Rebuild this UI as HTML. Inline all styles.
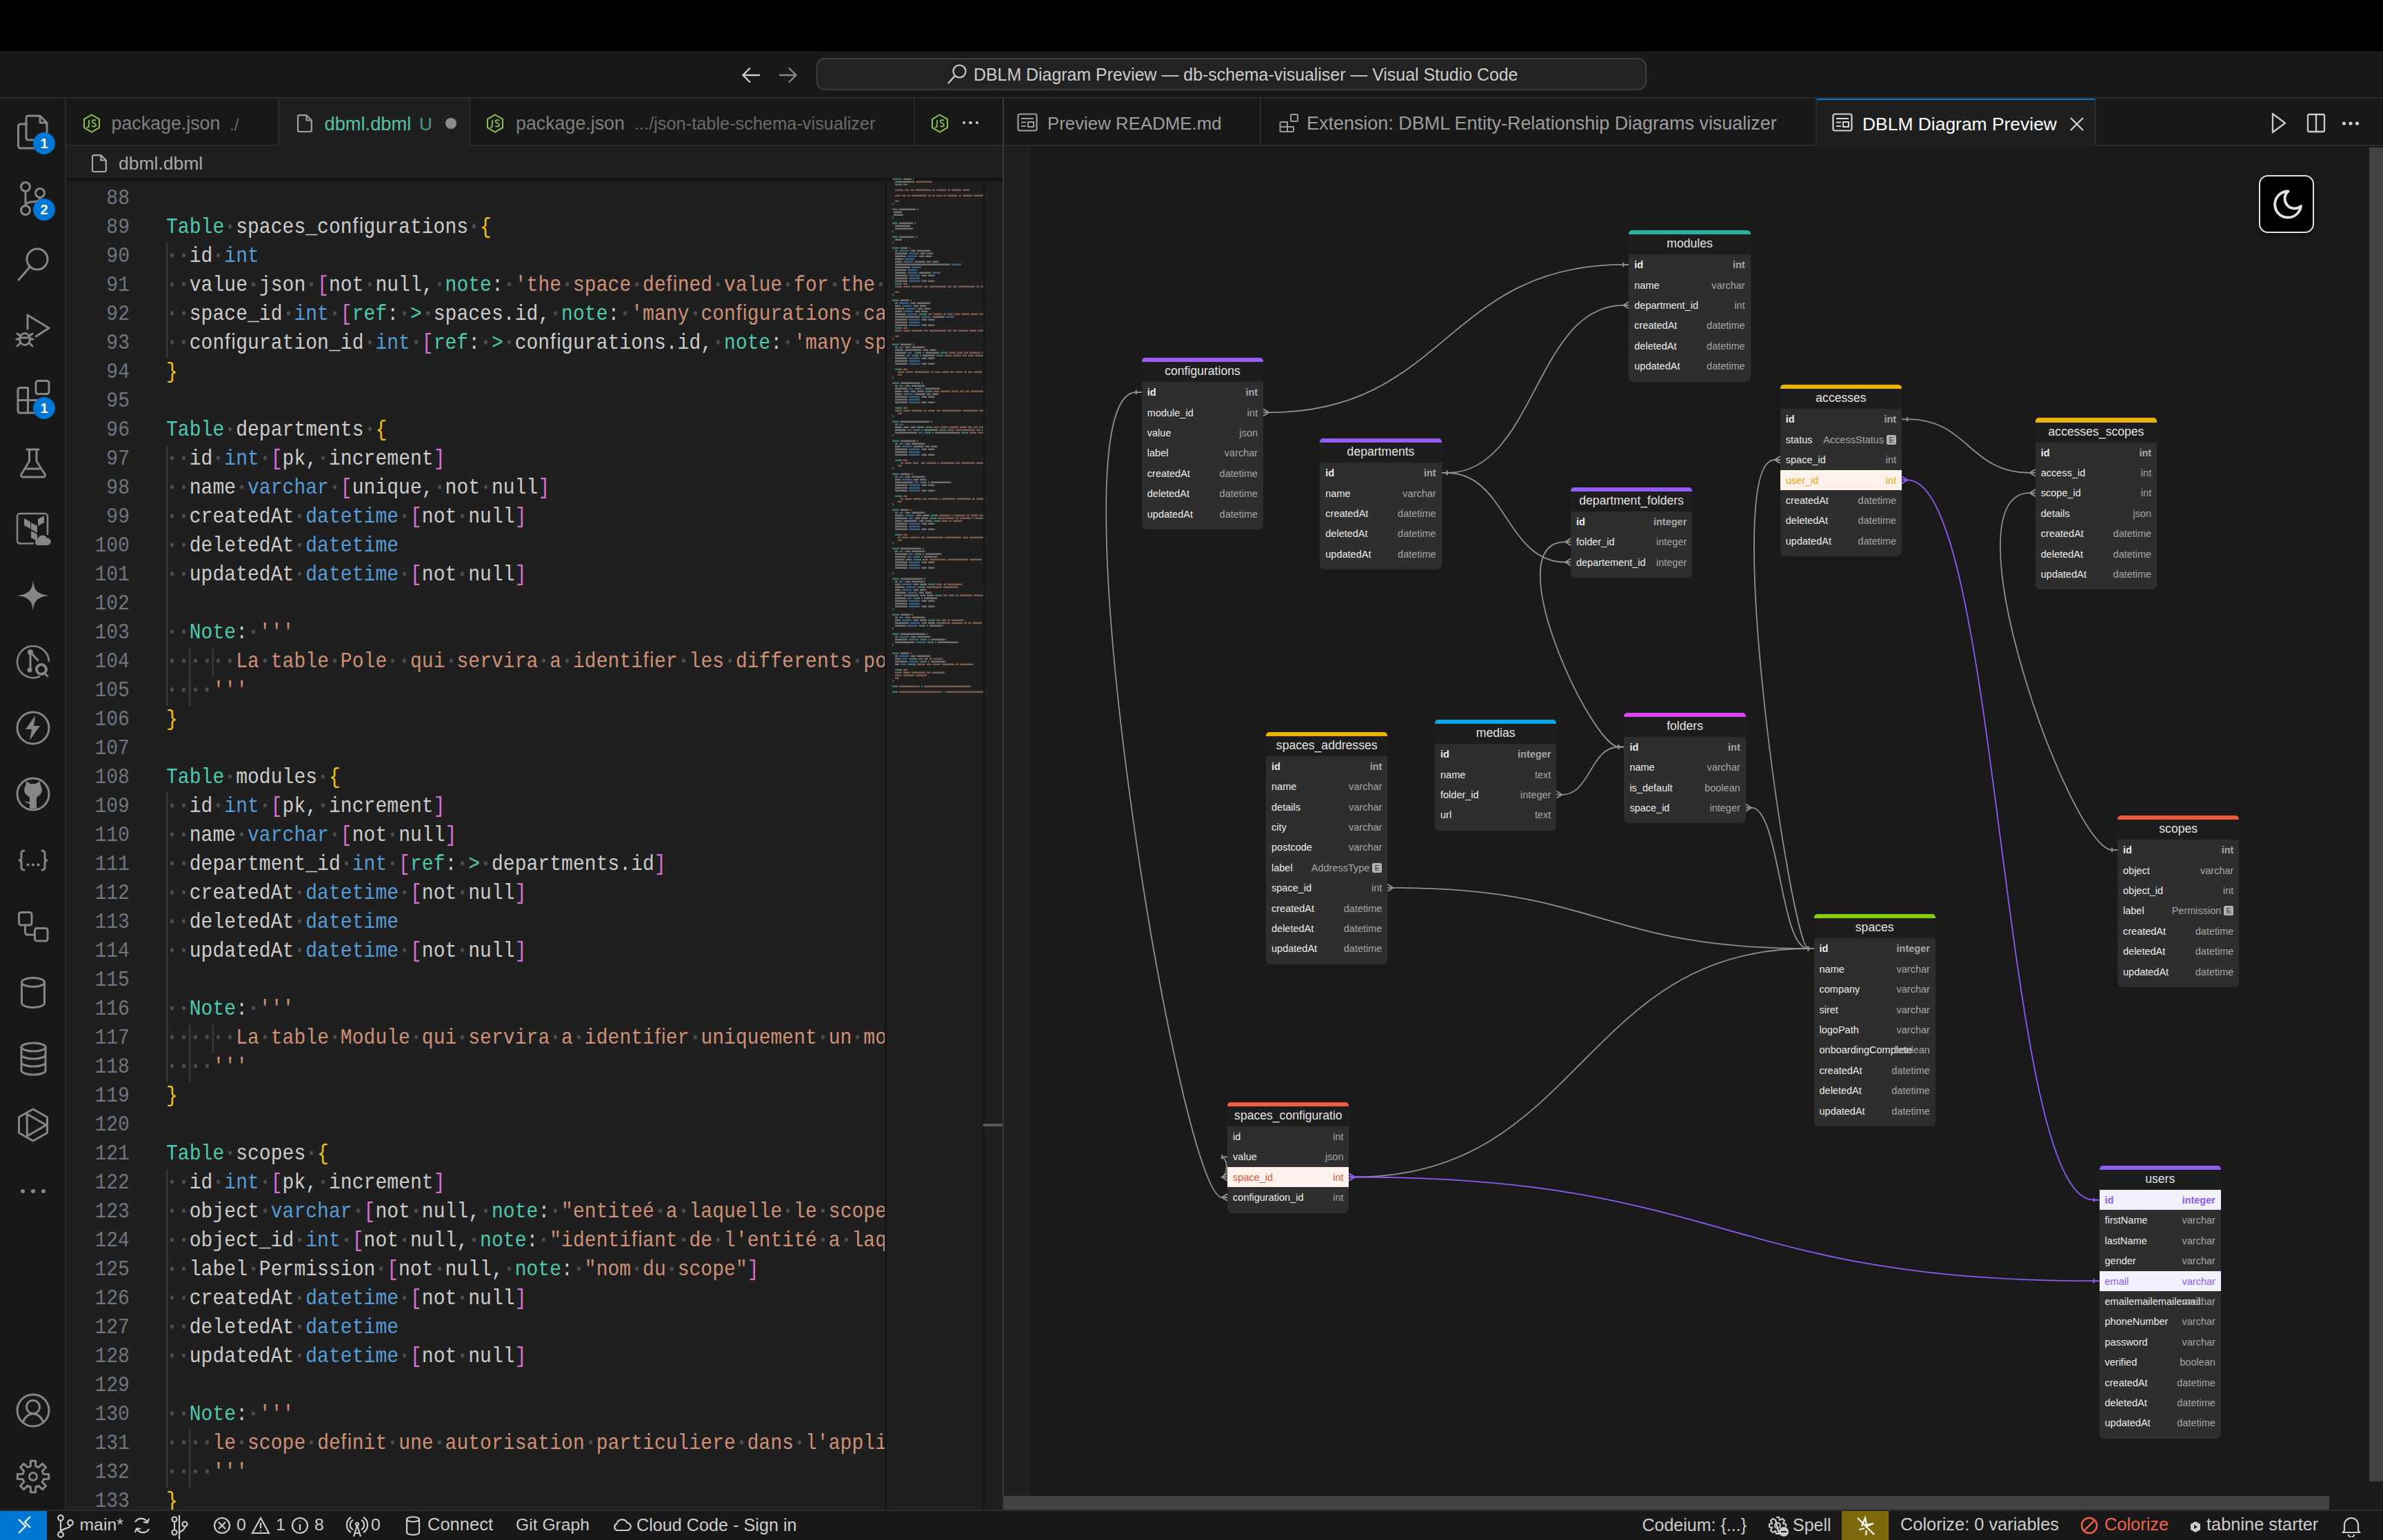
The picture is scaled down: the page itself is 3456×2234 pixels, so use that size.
<!DOCTYPE html><html><head><meta charset="utf-8"><style>
*{box-sizing:border-box;margin:0;padding:0}
html,body{width:3456px;height:2234px;overflow:hidden;background:#000}
body{position:relative;font-family:"Liberation Sans",sans-serif;color:#cccccc}
.a{position:absolute}
.t{position:absolute;white-space:pre;line-height:1}
.mono{font-family:"Liberation Mono",monospace}

.code{font-size:28px;letter-spacing:0.05px;transform:scaleY(1.13);transform-origin:0 76%}
.ln{font-size:28px;color:#6e7681;letter-spacing:0.05px;transform:scaleY(1.13);transform-origin:0 76%}
.ws{color:transparent;background:radial-gradient(circle at 50% 47%, #4d4d4d 2.2px, rgba(31,31,31,0) 3.1px);background-size:16.85px 100%}
.kw{color:#4ec9b0}.ty{color:#569cd6}.st{color:#ce9178}.tx{color:#cccccc}.br1{color:#f2c40f}.br2{color:#da70d6}

.dh{font-size:17.6px;color:#e3e3e3;text-align:center;white-space:nowrap;overflow:hidden}
.df{font-size:14.5px;white-space:nowrap}
</style></head><body><div class="a" style="left:0.0px;top:74.0px;width:3456.0px;height:67.0px;background:#181818;"></div><div class="a" style="left:0.0px;top:141.0px;width:3456.0px;height:2.0px;background:#2b2b2b;"></div><svg class="a" style="left:1070px;top:94px" width="100" height="30" fill="none"><path d="M32 15 H8 M18 4.5 L7.5 15 L18 25.5" stroke="#cccccc" stroke-width="2.4"/><path d="M60 15 H84 M74 4.5 L84.5 15 L74 25.5" stroke="#8a8a8a" stroke-width="2.4"/></svg><div class="a" style="left:1184px;top:84px;width:1204px;height:47px;border:2px solid #3d3d3d;border-radius:12px;background:#222222"></div><svg class="a" style="left:1370px;top:92px" width="36" height="34" fill="none"><circle cx="21.5" cy="11.5" r="9" stroke="#cccccc" stroke-width="2.2"/><path d="M15 18 L5 29" stroke="#cccccc" stroke-width="2.2"/></svg><div class="t" style="left:1412.0px;top:95.8px;font-size:24.9px;color:#cccccc;">DBLM Diagram Preview — db-schema-visualiser — Visual Studio Code</div><div class="a" style="left:0.0px;top:143.0px;width:94.0px;height:2047.0px;background:#181818;"></div><div class="a" style="left:94.0px;top:143.0px;width:2.0px;height:2047.0px;background:#2b2b2b;"></div><svg class="a" style="left:0;top:0" width="96" height="2234" fill="none"><path stroke="#868686" stroke-width="3" stroke-linecap="round" stroke-linejoin="round" d="M38 180 H29.5 a3 3 0 0 0 -3 3 V212 a3 3 0 0 0 3 3 H49"/><path stroke="#868686" stroke-width="3" stroke-linecap="round" stroke-linejoin="round" d="M41 168 H58 L68 178 V200 a3 3 0 0 1 -3 3 H41 a3 3 0 0 1 -3 -3 V171 a3 3 0 0 1 3 -3 Z M58 168 V178 H68"/><circle stroke="#868686" stroke-width="3" stroke-linecap="round" stroke-linejoin="round" cx="37" cy="271" r="6.5"/><circle stroke="#868686" stroke-width="3" stroke-linecap="round" stroke-linejoin="round" cx="58" cy="280" r="6.5"/><circle stroke="#868686" stroke-width="3" stroke-linecap="round" stroke-linejoin="round" cx="37" cy="305" r="6.5"/><path stroke="#868686" stroke-width="3" stroke-linecap="round" stroke-linejoin="round" d="M37 277.5 V298.5 M58 286.5 C58 294 50 292 44 293 C40 294 37 296 37 298"/><circle stroke="#868686" stroke-width="3" stroke-linecap="round" stroke-linejoin="round" cx="54" cy="376" r="15"/><path stroke="#868686" stroke-width="3" stroke-linecap="round" stroke-linejoin="round" d="M43.5 387 L27 406"/><path stroke="#868686" stroke-width="3" stroke-linecap="round" stroke-linejoin="round" d="M40 477 V457 L71 476 L52 488"/><path stroke="#868686" stroke-width="3" stroke-linecap="round" stroke-linejoin="round" d="M36 483.5 a7.5 8.5 0 0 1 7.5 8.5 a7.5 8.5 0 0 1 -15 0 a7.5 8.5 0 0 1 7.5 -8.5 Z M28.5 490 H43.5 M24 492 H28.5 M43.5 492 H48 M25 484 L29 487 M47 484 L43 487 M25 502 L29 498 M47 502 L43 498"/><path stroke="#868686" stroke-width="3" stroke-linecap="round" stroke-linejoin="round" d="M29 562.5 H40.5 V580.5 H55.5 V596 a3 3 0 0 1 -3 3 H29 a3 3 0 0 1 -3 -3 V565.5 a3 3 0 0 1 3 -3 Z M26 580.5 H40.5 V599"/><rect stroke="#868686" stroke-width="3" stroke-linecap="round" stroke-linejoin="round" x="52" y="552.5" width="19" height="19" rx="3"/><path stroke="#868686" stroke-width="3" stroke-linecap="round" stroke-linejoin="round" d="M39 652 H56 M42.5 652 V669 L31 688 a2.5 2.5 0 0 0 2 4 H63 a2.5 2.5 0 0 0 2 -4 L53 669 V652 M36 680 H60"/><path stroke="#868686" stroke-width="2.5" d="M49 788.5 H29 a4 4 0 0 1 -4 -4 V749 a4 4 0 0 1 4 -4 H65 a4 4 0 0 1 4 4 V776"/><path fill="#868686" d="M35 752 L44 757 V767 L35 762 Z M45 758 L54 763 V773 L45 768 Z M55 763 L64 758 V748 L55 753 Z M45 770 L54 775 V785 L45 780 Z"/><path fill="#868686" d="M54 791 a5 5 0 0 1 1 -9.5 a7 7 0 0 1 13 -1 a5 5 0 0 1 1 10.5 Z"/><path fill="#868686" d="M48 841 C49 856 54 862 71 864 C54 866 49 872 48 887 C47 872 42 866 25 864 C42 862 47 856 48 841 Z"/><path stroke="#868686" stroke-width="2.5" d="M58 981 A23 23 0 1 1 71 960"/><circle fill="#868686" cx="44" cy="946" r="4"/><circle fill="#868686" cx="43" cy="972" r="3.5"/><path stroke="#868686" stroke-width="3" stroke-linecap="round" stroke-linejoin="round" d="M44 948 V972 M46 948 L55 958"/><circle stroke="#868686" stroke-width="4" cx="60" cy="971" r="7"/><path stroke="#868686" stroke-width="3" stroke-linecap="round" stroke-linejoin="round" d="M65 977 L69 981"/><circle stroke="#868686" stroke-width="3" stroke-linecap="round" stroke-linejoin="round" cx="48" cy="1056" r="23"/><path fill="#868686" d="M51 1038 L37 1058 H46 L43 1074 L58 1053 H49 Z"/><circle stroke="#868686" stroke-width="3" stroke-linecap="round" stroke-linejoin="round" cx="48" cy="1152" r="23"/><path fill="#868686" d="M37 1140 L38 1133 L44 1137 H52 L58 1133 L59 1140 C62 1143 62 1152 55 1155 C53 1156 53 1158 53 1160 V1173 H43 V1166 C39 1166 37 1163 35 1161 C37 1162 40 1165 43 1163 V1160 C43 1158 43 1156 41 1155 C34 1152 34 1143 37 1140 Z"/><path stroke="#868686" stroke-width="3" stroke-linecap="round" stroke-linejoin="round" d="M35 1234 C31 1234 31 1236 31 1240 V1245 C31 1247 30 1248 28 1248 C30 1248 31 1249 31 1251 V1256 C31 1260 31 1262 35 1262 M61 1234 C65 1234 65 1236 65 1240 V1245 C65 1247 66 1248 68 1248 C66 1248 65 1249 65 1251 V1256 C65 1260 65 1262 61 1262"/><circle fill="#868686" cx="40.5" cy="1254.5" r="2"/><circle fill="#868686" cx="48" cy="1254.5" r="2"/><circle fill="#868686" cx="55.5" cy="1254.5" r="2"/><rect stroke="#868686" stroke-width="3" stroke-linecap="round" stroke-linejoin="round" x="27.5" y="1323.5" width="18.5" height="18.5" rx="3"/><rect stroke="#868686" stroke-width="3" stroke-linecap="round" stroke-linejoin="round" x="50.5" y="1346.5" width="18.5" height="18.5" rx="3"/><path stroke="#868686" stroke-width="3" stroke-linecap="round" stroke-linejoin="round" d="M36.5 1342 V1352 a4 4 0 0 0 4 4 H50.5"/><ellipse stroke="#868686" stroke-width="3" stroke-linecap="round" stroke-linejoin="round" cx="48" cy="1425" rx="16.5" ry="6.5"/><path stroke="#868686" stroke-width="3" stroke-linecap="round" stroke-linejoin="round" d="M31.5 1425 V1455 a16.5 6.5 0 0 0 33 0 V1425"/><ellipse stroke="#868686" stroke-width="3" stroke-linecap="round" stroke-linejoin="round" cx="48.5" cy="1519" rx="17.5" ry="6"/><path stroke="#868686" stroke-width="3" stroke-linecap="round" stroke-linejoin="round" d="M31 1519 V1553 a17.5 6 0 0 0 35 0 V1519 M31 1530 a17.5 6 0 0 0 35 0 M31 1541 a17.5 6 0 0 0 35 0"/><path stroke="#868686" stroke-width="3" stroke-linecap="round" stroke-linejoin="round" d="M48 1609 L68.5 1620.5 V1643.5 L48 1655 L27.5 1643.5 V1620.5 Z M39 1616 L39.5 1648 L67 1632 Z"/><circle fill="#868686" cx="33" cy="1728" r="3"/><circle fill="#868686" cx="48" cy="1728" r="3"/><circle fill="#868686" cx="63" cy="1728" r="3"/><circle stroke="#868686" stroke-width="3" stroke-linecap="round" stroke-linejoin="round" cx="48" cy="2046" r="23"/><circle stroke="#868686" stroke-width="3" stroke-linecap="round" stroke-linejoin="round" cx="48" cy="2041" r="9.5"/><path stroke="#868686" stroke-width="3" stroke-linecap="round" stroke-linejoin="round" d="M33.5 2063 C36 2055 42 2051 48 2051 C54 2051 60 2055 62.5 2063"/><path stroke="#868686" stroke-width="3" stroke-linecap="round" stroke-linejoin="round" d="M44.4 2119.3 L51.6 2119.3 L51.7 2127.0 L56.0 2128.7 L61.5 2123.4 L66.6 2128.5 L61.3 2134.0 L63.0 2138.3 L70.7 2138.4 L70.7 2145.6 L63.0 2145.7 L61.3 2150.0 L66.6 2155.5 L61.5 2160.6 L56.0 2155.3 L51.7 2157.0 L51.6 2164.7 L44.4 2164.7 L44.3 2157.0 L40.0 2155.3 L34.5 2160.6 L29.4 2155.5 L34.7 2150.0 L33.0 2145.7 L25.3 2145.6 L25.3 2138.4 L33.0 2138.3 L34.7 2134.0 L29.4 2128.5 L34.5 2123.4 L40.0 2128.7 L44.3 2127.0 Z"/><circle stroke="#868686" stroke-width="3" stroke-linecap="round" stroke-linejoin="round" cx="48" cy="2142" r="5.5"/></svg><div class="a" style="left:48px;top:192px;width:32px;height:32px;border-radius:16px;background:#0078d4;color:#fff;font-size:20px;font-weight:bold;text-align:center;line-height:32px">1</div><div class="a" style="left:48px;top:288px;width:32px;height:32px;border-radius:16px;background:#0078d4;color:#fff;font-size:20px;font-weight:bold;text-align:center;line-height:32px">2</div><div class="a" style="left:48px;top:576px;width:32px;height:32px;border-radius:16px;background:#0078d4;color:#fff;font-size:20px;font-weight:bold;text-align:center;line-height:32px">1</div><div class="a" style="left:96.0px;top:143.0px;width:1358.0px;height:69.0px;background:#181818;"></div><div class="a" style="left:96.0px;top:210.0px;width:1358.0px;height:2.0px;background:#2b2b2b;"></div><div class="a" style="left:403.0px;top:143.0px;width:2.0px;height:69.0px;background:#2b2b2b;"></div><svg class="a" style="left:120px;top:165px" width="26" height="28" viewBox="0 0 26 28" fill="none"><path d="M13 1.5 L24 7.8 V20.2 L13 26.5 L2 20.2 V7.8 Z" stroke="#8bc34a" stroke-width="2"/><path d="M9 9 V17.5 C9 19.5 7 20 6 19" stroke="#8bc34a" stroke-width="1.8"/><path d="M19 10 C17.5 8.5 13.5 8.8 13.5 11.3 C13.5 14 19 13 19 16.3 C19 19 15 19.3 13.3 17.6" stroke="#8bc34a" stroke-width="1.8"/></svg><div class="t" style="left:161.5px;top:166.2px;font-size:26.8px;color:#7f7f7f;">package.json</div><div class="t" style="left:333.0px;top:168.6px;font-size:24px;color:#6a6a6a;">./</div><div class="a" style="left:405.0px;top:143.0px;width:275.0px;height:69.0px;background:#1f1f1f;"></div><div class="a" style="left:680.0px;top:143.0px;width:2.0px;height:69.0px;background:#2b2b2b;"></div><svg class="a" style="left:431px;top:166px" width="22" height="26" viewBox="0 0 22 26" fill="none"><path d="M3 1.2 H13.5 L20.8 8.5 V23 a2 2 0 0 1 -2 2 H3 a2 2 0 0 1 -2 -2 V3.2 a2 2 0 0 1 2 -2 Z M13.5 1.2 V8.5 H20.8" stroke="#a0a0a0" stroke-width="2.2" stroke-linejoin="round"/></svg><div class="t" style="left:470.5px;top:165.8px;font-size:27.25px;color:#56c2a6;">dbml.dbml</div><div class="t" style="left:608.0px;top:166.9px;font-size:26px;color:#4b9c89;">U</div><div class="a" style="left:645.5px;top:171px;width:16px;height:16px;border-radius:8px;background:#8a8a8a"></div><div class="a" style="left:1325.0px;top:143.0px;width:2.0px;height:69.0px;background:#2b2b2b;"></div><svg class="a" style="left:705px;top:165px" width="26" height="28" viewBox="0 0 26 28" fill="none"><path d="M13 1.5 L24 7.8 V20.2 L13 26.5 L2 20.2 V7.8 Z" stroke="#8bc34a" stroke-width="2"/><path d="M9 9 V17.5 C9 19.5 7 20 6 19" stroke="#8bc34a" stroke-width="1.8"/><path d="M19 10 C17.5 8.5 13.5 8.8 13.5 11.3 C13.5 14 19 13 19 16.3 C19 19 15 19.3 13.3 17.6" stroke="#8bc34a" stroke-width="1.8"/></svg><div class="t" style="left:748.0px;top:166.2px;font-size:26.8px;color:#7f7f7f;">package.json</div><div class="t" style="left:920.0px;top:167.4px;font-size:25.36px;color:#6a6a6a;">.../json-table-schema-visualizer</div><svg class="a" style="left:1350px;top:165px" width="26" height="28" viewBox="0 0 26 28" fill="none"><path d="M13 1.5 L24 7.8 V20.2 L13 26.5 L2 20.2 V7.8 Z" stroke="#8bc34a" stroke-width="2"/><path d="M9 9 V17.5 C9 19.5 7 20 6 19" stroke="#8bc34a" stroke-width="1.8"/><path d="M19 10 C17.5 8.5 13.5 8.8 13.5 11.3 C13.5 14 19 13 19 16.3 C19 19 15 19.3 13.3 17.6" stroke="#8bc34a" stroke-width="1.8"/></svg><div class="a" style="left:1395.8px;top:175.8px;width:4.4px;height:4.4px;border-radius:3px;background:#cccccc"></div><div class="a" style="left:1405.3px;top:175.8px;width:4.4px;height:4.4px;border-radius:3px;background:#cccccc"></div><div class="a" style="left:1414.8px;top:175.8px;width:4.4px;height:4.4px;border-radius:3px;background:#cccccc"></div><div class="a" style="left:96.0px;top:212.0px;width:1358.0px;height:46.0px;background:#1f1f1f;"></div><svg class="a" style="left:133px;top:224px" width="22" height="26" viewBox="0 0 22 26" fill="none"><path d="M3 1.2 H13.5 L20.8 8.5 V23 a2 2 0 0 1 -2 2 H3 a2 2 0 0 1 -2 -2 V3.2 a2 2 0 0 1 2 -2 Z M13.5 1.2 V8.5 H20.8" stroke="#a9a9a9" stroke-width="2.2" stroke-linejoin="round"/></svg><div class="t" style="left:172.0px;top:223.5px;font-size:26.5px;color:#a9a9a9;">dbml.dbml</div><div class="a" style="left:96.0px;top:258.0px;width:1358.0px;height:1932.0px;background:#1f1f1f;"></div><div class="t mono ln" style="left:154.3px;top:274.9px">88</div><div class="t mono ln" style="left:154.3px;top:316.9px">89</div><div class="t mono ln" style="left:154.3px;top:358.9px">90</div><div class="t mono ln" style="left:154.3px;top:400.9px">91</div><div class="t mono ln" style="left:154.3px;top:442.9px">92</div><div class="t mono ln" style="left:154.3px;top:484.9px">93</div><div class="t mono ln" style="left:154.3px;top:526.9px">94</div><div class="t mono ln" style="left:154.3px;top:568.9px">95</div><div class="t mono ln" style="left:154.3px;top:610.9px">96</div><div class="t mono ln" style="left:154.3px;top:652.9px">97</div><div class="t mono ln" style="left:154.3px;top:694.9px">98</div><div class="t mono ln" style="left:154.3px;top:736.9px">99</div><div class="t mono ln" style="left:137.4px;top:778.9px">100</div><div class="t mono ln" style="left:137.4px;top:820.9px">101</div><div class="t mono ln" style="left:137.4px;top:862.9px">102</div><div class="t mono ln" style="left:137.4px;top:904.9px">103</div><div class="t mono ln" style="left:137.4px;top:946.9px">104</div><div class="t mono ln" style="left:137.4px;top:988.9px">105</div><div class="t mono ln" style="left:137.4px;top:1030.9px">106</div><div class="t mono ln" style="left:137.4px;top:1072.9px">107</div><div class="t mono ln" style="left:137.4px;top:1114.9px">108</div><div class="t mono ln" style="left:137.4px;top:1156.9px">109</div><div class="t mono ln" style="left:137.4px;top:1198.9px">110</div><div class="t mono ln" style="left:137.4px;top:1240.9px">111</div><div class="t mono ln" style="left:137.4px;top:1282.9px">112</div><div class="t mono ln" style="left:137.4px;top:1324.9px">113</div><div class="t mono ln" style="left:137.4px;top:1366.9px">114</div><div class="t mono ln" style="left:137.4px;top:1408.9px">115</div><div class="t mono ln" style="left:137.4px;top:1450.9px">116</div><div class="t mono ln" style="left:137.4px;top:1492.9px">117</div><div class="t mono ln" style="left:137.4px;top:1534.9px">118</div><div class="t mono ln" style="left:137.4px;top:1576.9px">119</div><div class="t mono ln" style="left:137.4px;top:1618.9px">120</div><div class="t mono ln" style="left:137.4px;top:1660.9px">121</div><div class="t mono ln" style="left:137.4px;top:1702.9px">122</div><div class="t mono ln" style="left:137.4px;top:1744.9px">123</div><div class="t mono ln" style="left:137.4px;top:1786.9px">124</div><div class="t mono ln" style="left:137.4px;top:1828.9px">125</div><div class="t mono ln" style="left:137.4px;top:1870.9px">126</div><div class="t mono ln" style="left:137.4px;top:1912.9px">127</div><div class="t mono ln" style="left:137.4px;top:1954.9px">128</div><div class="t mono ln" style="left:137.4px;top:1996.9px">129</div><div class="t mono ln" style="left:137.4px;top:2038.9px">130</div><div class="t mono ln" style="left:137.4px;top:2080.9px">131</div><div class="t mono ln" style="left:137.4px;top:2122.9px">132</div><div class="t mono ln" style="left:137.4px;top:2164.9px">133</div><div class="a" style="left:240.5px;top:352.0px;width:2.0px;height:168.0px;background:#3a3a3a;"></div><div class="a" style="left:240.5px;top:646.0px;width:2.0px;height:378.0px;background:#3a3a3a;"></div><div class="a" style="left:274.2px;top:940.0px;width:2.0px;height:84.0px;background:#3a3a3a;"></div><div class="a" style="left:307.9px;top:940.0px;width:2.0px;height:42.0px;background:#3a3a3a;"></div><div class="a" style="left:240.5px;top:1150.0px;width:2.0px;height:420.0px;background:#3a3a3a;"></div><div class="a" style="left:274.2px;top:1486.0px;width:2.0px;height:84.0px;background:#3a3a3a;"></div><div class="a" style="left:307.9px;top:1486.0px;width:2.0px;height:42.0px;background:#3a3a3a;"></div><div class="a" style="left:240.5px;top:1696.0px;width:2.0px;height:462.0px;background:#3a3a3a;"></div><div class="a" style="left:274.2px;top:2074.0px;width:2.0px;height:84.0px;background:#3a3a3a;"></div><div class="a" style="left:96px;top:258px;width:1188px;height:1932px;overflow:hidden"><div class="a" style="left:-96px;top:-258px;width:1300px;height:2234px"><div class="t mono code" style="left:241px;top:274.9px"></div><div class="t mono code" style="left:241px;top:316.9px"><span class="kw">Table</span><span class="ws">·</span><span class="tx">spaces_conﬁgurations</span><span class="ws">·</span><span class="br1">{</span></div><div class="t mono code" style="left:241px;top:358.9px"><span class="ws">·</span><span class="ws">·</span><span class="tx">id</span><span class="ws">·</span><span class="ty">int</span></div><div class="t mono code" style="left:241px;top:400.9px"><span class="ws">·</span><span class="ws">·</span><span class="tx">value</span><span class="ws">·</span><span class="tx">json</span><span class="ws">·</span><span class="br2">[</span><span class="tx">not</span><span class="ws">·</span><span class="tx">null</span><span class="tx">,</span><span class="ws">·</span><span class="kw">note</span><span class="tx">:</span><span class="ws">·</span><span class="st">&#x27;the</span><span class="ws">·</span><span class="st">space</span><span class="ws">·</span><span class="st">deﬁned</span><span class="ws">·</span><span class="st">value</span><span class="ws">·</span><span class="st">for</span><span class="ws">·</span><span class="st">the</span><span class="ws">·</span><span class="st">conﬁguration&#x27;</span><span class="br2">]</span></div><div class="t mono code" style="left:241px;top:442.9px"><span class="ws">·</span><span class="ws">·</span><span class="tx">space_id</span><span class="ws">·</span><span class="ty">int</span><span class="ws">·</span><span class="br2">[</span><span class="kw">ref</span><span class="tx">:</span><span class="ws">·</span><span class="kw">&gt;</span><span class="ws">·</span><span class="tx">spaces</span><span class="tx">.</span><span class="tx">id</span><span class="tx">,</span><span class="ws">·</span><span class="kw">note</span><span class="tx">:</span><span class="ws">·</span><span class="st">&#x27;many</span><span class="ws">·</span><span class="st">conﬁgurations</span><span class="ws">·</span><span class="st">can</span><span class="ws">·</span><span class="st">be</span><span class="ws">·</span><span class="st">set</span><span class="ws">·</span><span class="st">for</span><span class="ws">·</span><span class="st">a</span><span class="ws">·</span><span class="st">space&#x27;</span><span class="br2">]</span></div><div class="t mono code" style="left:241px;top:484.9px"><span class="ws">·</span><span class="ws">·</span><span class="tx">conﬁguration_id</span><span class="ws">·</span><span class="ty">int</span><span class="ws">·</span><span class="br2">[</span><span class="kw">ref</span><span class="tx">:</span><span class="ws">·</span><span class="kw">&gt;</span><span class="ws">·</span><span class="tx">conﬁgurations</span><span class="tx">.</span><span class="tx">id</span><span class="tx">,</span><span class="ws">·</span><span class="kw">note</span><span class="tx">:</span><span class="ws">·</span><span class="st">&#x27;many</span><span class="ws">·</span><span class="st">spaces</span><span class="ws">·</span><span class="st">can</span><span class="ws">·</span><span class="st">use</span><span class="ws">·</span><span class="st">a</span><span class="ws">·</span><span class="st">conﬁguration&#x27;</span><span class="br2">]</span></div><div class="t mono code" style="left:241px;top:526.9px"><span class="br1">}</span></div><div class="t mono code" style="left:241px;top:568.9px"></div><div class="t mono code" style="left:241px;top:610.9px"><span class="kw">Table</span><span class="ws">·</span><span class="tx">departments</span><span class="ws">·</span><span class="br1">{</span></div><div class="t mono code" style="left:241px;top:652.9px"><span class="ws">·</span><span class="ws">·</span><span class="tx">id</span><span class="ws">·</span><span class="ty">int</span><span class="ws">·</span><span class="br2">[</span><span class="tx">pk</span><span class="tx">,</span><span class="ws">·</span><span class="tx">increment</span><span class="br2">]</span></div><div class="t mono code" style="left:241px;top:694.9px"><span class="ws">·</span><span class="ws">·</span><span class="tx">name</span><span class="ws">·</span><span class="ty">varchar</span><span class="ws">·</span><span class="br2">[</span><span class="tx">unique</span><span class="tx">,</span><span class="ws">·</span><span class="tx">not</span><span class="ws">·</span><span class="tx">null</span><span class="br2">]</span></div><div class="t mono code" style="left:241px;top:736.9px"><span class="ws">·</span><span class="ws">·</span><span class="tx">createdAt</span><span class="ws">·</span><span class="ty">datetime</span><span class="ws">·</span><span class="br2">[</span><span class="tx">not</span><span class="ws">·</span><span class="tx">null</span><span class="br2">]</span></div><div class="t mono code" style="left:241px;top:778.9px"><span class="ws">·</span><span class="ws">·</span><span class="tx">deletedAt</span><span class="ws">·</span><span class="ty">datetime</span></div><div class="t mono code" style="left:241px;top:820.9px"><span class="ws">·</span><span class="ws">·</span><span class="tx">updatedAt</span><span class="ws">·</span><span class="ty">datetime</span><span class="ws">·</span><span class="br2">[</span><span class="tx">not</span><span class="ws">·</span><span class="tx">null</span><span class="br2">]</span></div><div class="t mono code" style="left:241px;top:862.9px"></div><div class="t mono code" style="left:241px;top:904.9px"><span class="ws">·</span><span class="ws">·</span><span class="kw">Note</span><span class="tx">:</span><span class="ws">·</span><span class="st">&#x27;&#x27;&#x27;</span></div><div class="t mono code" style="left:241px;top:946.9px"><span class="ws">·</span><span class="ws">·</span><span class="ws">·</span><span class="ws">·</span><span class="ws">·</span><span class="ws">·</span><span class="st">La</span><span class="ws">·</span><span class="st">table</span><span class="ws">·</span><span class="st">Pole</span><span class="ws">··</span><span class="st">qui</span><span class="ws">·</span><span class="st">servira</span><span class="ws">·</span><span class="st">a</span><span class="ws">·</span><span class="st">identiﬁer</span><span class="ws">·</span><span class="st">les</span><span class="ws">·</span><span class="st">differents</span><span class="ws">·</span><span class="st">poles</span><span class="ws">·</span><span class="st">de</span><span class="ws">·</span><span class="st">l&#x27;entreprise</span></div><div class="t mono code" style="left:241px;top:988.9px"><span class="ws">·</span><span class="ws">·</span><span class="ws">·</span><span class="ws">·</span><span class="st">&#x27;&#x27;&#x27;</span></div><div class="t mono code" style="left:241px;top:1030.9px"><span class="br1">}</span></div><div class="t mono code" style="left:241px;top:1072.9px"></div><div class="t mono code" style="left:241px;top:1114.9px"><span class="kw">Table</span><span class="ws">·</span><span class="tx">modules</span><span class="ws">·</span><span class="br1">{</span></div><div class="t mono code" style="left:241px;top:1156.9px"><span class="ws">·</span><span class="ws">·</span><span class="tx">id</span><span class="ws">·</span><span class="ty">int</span><span class="ws">·</span><span class="br2">[</span><span class="tx">pk</span><span class="tx">,</span><span class="ws">·</span><span class="tx">increment</span><span class="br2">]</span></div><div class="t mono code" style="left:241px;top:1198.9px"><span class="ws">·</span><span class="ws">·</span><span class="tx">name</span><span class="ws">·</span><span class="ty">varchar</span><span class="ws">·</span><span class="br2">[</span><span class="tx">not</span><span class="ws">·</span><span class="tx">null</span><span class="br2">]</span></div><div class="t mono code" style="left:241px;top:1240.9px"><span class="ws">·</span><span class="ws">·</span><span class="tx">department_id</span><span class="ws">·</span><span class="ty">int</span><span class="ws">·</span><span class="br2">[</span><span class="kw">ref</span><span class="tx">:</span><span class="ws">·</span><span class="kw">&gt;</span><span class="ws">·</span><span class="tx">departments</span><span class="tx">.</span><span class="tx">id</span><span class="br2">]</span></div><div class="t mono code" style="left:241px;top:1282.9px"><span class="ws">·</span><span class="ws">·</span><span class="tx">createdAt</span><span class="ws">·</span><span class="ty">datetime</span><span class="ws">·</span><span class="br2">[</span><span class="tx">not</span><span class="ws">·</span><span class="tx">null</span><span class="br2">]</span></div><div class="t mono code" style="left:241px;top:1324.9px"><span class="ws">·</span><span class="ws">·</span><span class="tx">deletedAt</span><span class="ws">·</span><span class="ty">datetime</span></div><div class="t mono code" style="left:241px;top:1366.9px"><span class="ws">·</span><span class="ws">·</span><span class="tx">updatedAt</span><span class="ws">·</span><span class="ty">datetime</span><span class="ws">·</span><span class="br2">[</span><span class="tx">not</span><span class="ws">·</span><span class="tx">null</span><span class="br2">]</span></div><div class="t mono code" style="left:241px;top:1408.9px"></div><div class="t mono code" style="left:241px;top:1450.9px"><span class="ws">·</span><span class="ws">·</span><span class="kw">Note</span><span class="tx">:</span><span class="ws">·</span><span class="st">&#x27;&#x27;&#x27;</span></div><div class="t mono code" style="left:241px;top:1492.9px"><span class="ws">·</span><span class="ws">·</span><span class="ws">·</span><span class="ws">·</span><span class="ws">·</span><span class="ws">·</span><span class="st">La</span><span class="ws">·</span><span class="st">table</span><span class="ws">·</span><span class="st">Module</span><span class="ws">·</span><span class="st">qui</span><span class="ws">·</span><span class="st">servira</span><span class="ws">·</span><span class="st">a</span><span class="ws">·</span><span class="st">identiﬁer</span><span class="ws">·</span><span class="st">uniquement</span><span class="ws">·</span><span class="st">un</span><span class="ws">·</span><span class="st">module</span></div><div class="t mono code" style="left:241px;top:1534.9px"><span class="ws">·</span><span class="ws">·</span><span class="ws">·</span><span class="ws">·</span><span class="st">&#x27;&#x27;&#x27;</span></div><div class="t mono code" style="left:241px;top:1576.9px"><span class="br1">}</span></div><div class="t mono code" style="left:241px;top:1618.9px"></div><div class="t mono code" style="left:241px;top:1660.9px"><span class="kw">Table</span><span class="ws">·</span><span class="tx">scopes</span><span class="ws">·</span><span class="br1">{</span></div><div class="t mono code" style="left:241px;top:1702.9px"><span class="ws">·</span><span class="ws">·</span><span class="tx">id</span><span class="ws">·</span><span class="ty">int</span><span class="ws">·</span><span class="br2">[</span><span class="tx">pk</span><span class="tx">,</span><span class="ws">·</span><span class="tx">increment</span><span class="br2">]</span></div><div class="t mono code" style="left:241px;top:1744.9px"><span class="ws">·</span><span class="ws">·</span><span class="tx">object</span><span class="ws">·</span><span class="ty">varchar</span><span class="ws">·</span><span class="br2">[</span><span class="tx">not</span><span class="ws">·</span><span class="tx">null</span><span class="tx">,</span><span class="ws">·</span><span class="kw">note</span><span class="tx">:</span><span class="ws">·</span><span class="st">&quot;entiteé</span><span class="ws">·</span><span class="st">a</span><span class="ws">·</span><span class="st">laquelle</span><span class="ws">·</span><span class="st">le</span><span class="ws">·</span><span class="st">scope</span><span class="ws">·</span><span class="st">est</span><span class="ws">·</span><span class="st">rattache&quot;</span><span class="br2">]</span></div><div class="t mono code" style="left:241px;top:1786.9px"><span class="ws">·</span><span class="ws">·</span><span class="tx">object_id</span><span class="ws">·</span><span class="ty">int</span><span class="ws">·</span><span class="br2">[</span><span class="tx">not</span><span class="ws">·</span><span class="tx">null</span><span class="tx">,</span><span class="ws">·</span><span class="kw">note</span><span class="tx">:</span><span class="ws">·</span><span class="st">&quot;identiﬁant</span><span class="ws">·</span><span class="st">de</span><span class="ws">·</span><span class="st">l&#x27;entité</span><span class="ws">·</span><span class="st">a</span><span class="ws">·</span><span class="st">laquelle</span><span class="ws">·</span><span class="st">le</span><span class="ws">·</span><span class="st">scope</span><span class="ws">·</span><span class="st">est</span><span class="ws">·</span><span class="st">rattache&quot;</span><span class="br2">]</span></div><div class="t mono code" style="left:241px;top:1828.9px"><span class="ws">·</span><span class="ws">·</span><span class="tx">label</span><span class="ws">·</span><span class="tx">Permission</span><span class="ws">·</span><span class="br2">[</span><span class="tx">not</span><span class="ws">·</span><span class="tx">null</span><span class="tx">,</span><span class="ws">·</span><span class="kw">note</span><span class="tx">:</span><span class="ws">·</span><span class="st">&quot;nom</span><span class="ws">·</span><span class="st">du</span><span class="ws">·</span><span class="st">scope&quot;</span><span class="br2">]</span></div><div class="t mono code" style="left:241px;top:1870.9px"><span class="ws">·</span><span class="ws">·</span><span class="tx">createdAt</span><span class="ws">·</span><span class="ty">datetime</span><span class="ws">·</span><span class="br2">[</span><span class="tx">not</span><span class="ws">·</span><span class="tx">null</span><span class="br2">]</span></div><div class="t mono code" style="left:241px;top:1912.9px"><span class="ws">·</span><span class="ws">·</span><span class="tx">deletedAt</span><span class="ws">·</span><span class="ty">datetime</span></div><div class="t mono code" style="left:241px;top:1954.9px"><span class="ws">·</span><span class="ws">·</span><span class="tx">updatedAt</span><span class="ws">·</span><span class="ty">datetime</span><span class="ws">·</span><span class="br2">[</span><span class="tx">not</span><span class="ws">·</span><span class="tx">null</span><span class="br2">]</span></div><div class="t mono code" style="left:241px;top:1996.9px"></div><div class="t mono code" style="left:241px;top:2038.9px"><span class="ws">·</span><span class="ws">·</span><span class="kw">Note</span><span class="tx">:</span><span class="ws">·</span><span class="st">&#x27;&#x27;&#x27;</span></div><div class="t mono code" style="left:241px;top:2080.9px"><span class="ws">·</span><span class="ws">·</span><span class="ws">·</span><span class="ws">·</span><span class="st">le</span><span class="ws">·</span><span class="st">scope</span><span class="ws">·</span><span class="st">deﬁnit</span><span class="ws">·</span><span class="st">une</span><span class="ws">·</span><span class="st">autorisation</span><span class="ws">·</span><span class="st">particuliere</span><span class="ws">·</span><span class="st">dans</span><span class="ws">·</span><span class="st">l&#x27;application</span></div><div class="t mono code" style="left:241px;top:2122.9px"><span class="ws">·</span><span class="ws">·</span><span class="ws">·</span><span class="ws">·</span><span class="st">&#x27;&#x27;&#x27;</span></div><div class="t mono code" style="left:241px;top:2164.9px"><span class="br1">}</span></div></div></div><div class="a" style="left:96px;top:258px;width:1358px;height:8px;background:linear-gradient(#0f0f0f,rgba(31,31,31,0))"></div><svg class="a" style="left:0;top:0" width="3456" height="1100"><path d="M1294 258.5h14v2.6h-14ZM1298 266.5h8v2.6h-8ZM1294 302.5h8v2.6h-8ZM1294 322.5h8v2.6h-8ZM1294 342.5h8v2.6h-8ZM1294 358.5h10v2.6h-10ZM1298 410.5h8v2.6h-8ZM1294 434.5h10v2.6h-10ZM1334 454.5h8v2.6h-8ZM1298 474.5h8v2.6h-8ZM1294 498.5h10v2.6h-10ZM1328 510.5h6v2.6h-6ZM1338 510.5h2v2.6h-2ZM1364 510.5h8v2.6h-8ZM1324 514.5h6v2.6h-6ZM1334 514.5h2v2.6h-2ZM1358 514.5h8v2.6h-8ZM1298 534.5h8v2.6h-8ZM1294 554.5h10v2.6h-10ZM1328 562.5h6v2.6h-6ZM1338 562.5h2v2.6h-2ZM1342 566.5h8v2.6h-8ZM1298 590.5h8v2.6h-8ZM1294 610.5h10v2.6h-10ZM1342 618.5h8v2.6h-8ZM1326 622.5h6v2.6h-6ZM1336 622.5h2v2.6h-2ZM1362 622.5h8v2.6h-8ZM1342 626.5h6v2.6h-6ZM1352 626.5h2v2.6h-2ZM1394 626.5h8v2.6h-8ZM1294 638.5h10v2.6h-10ZM1298 666.5h8v2.6h-8ZM1294 686.5h10v2.6h-10ZM1336 698.5h6v2.6h-6ZM1346 698.5h2v2.6h-2ZM1298 718.5h8v2.6h-8ZM1294 738.5h10v2.6h-10ZM1350 746.5h8v2.6h-8ZM1348 750.5h8v2.6h-8ZM1354 754.5h8v2.6h-8ZM1298 774.5h8v2.6h-8ZM1294 794.5h10v2.6h-10ZM1328 802.5h6v2.6h-6ZM1338 802.5h2v2.6h-2ZM1326 806.5h6v2.6h-6ZM1336 806.5h2v2.6h-2ZM1326 810.5h8v2.6h-8ZM1294 838.5h10v2.6h-10ZM1346 846.5h8v2.6h-8ZM1332 850.5h8v2.6h-8ZM1356 862.5h8v2.6h-8ZM1326 866.5h6v2.6h-6ZM1336 866.5h2v2.6h-2ZM1294 890.5h10v2.6h-10ZM1346 898.5h8v2.6h-8ZM1358 902.5h8v2.6h-8ZM1334 906.5h6v2.6h-6ZM1344 906.5h2v2.6h-2ZM1294 918.5h10v2.6h-10ZM1336 926.5h6v2.6h-6ZM1346 926.5h2v2.6h-2ZM1346 930.5h6v2.6h-6ZM1356 930.5h2v2.6h-2ZM1294 946.5h10v2.6h-10ZM1320 954.5h8v2.6h-8ZM1336 958.5h6v2.6h-6ZM1346 958.5h2v2.6h-2ZM1318 962.5h8v2.6h-8ZM1298 970.5h8v2.6h-8ZM1294 994.5h6v2.6h-6ZM1336 994.5h2v2.6h-2ZM1294 1002.5h6v2.6h-6ZM1368 1002.5h2v2.6h-2Z" fill="#4ec9b0" fill-opacity="0.5"/><path d="M1310 258.5h12v2.6h-12ZM1298 262.5h26v2.6h-26ZM1324 262.5h2v2.6h-2ZM1306 266.5h2v2.6h-2ZM1304 302.5h24v2.6h-24ZM1296 306.5h12v2.6h-12ZM1296 310.5h14v2.6h-14ZM1304 322.5h20v2.6h-20ZM1298 326.5h22v2.6h-22ZM1298 330.5h26v2.6h-26ZM1304 342.5h22v2.6h-22ZM1298 346.5h10v2.6h-10ZM1306 358.5h10v2.6h-10ZM1298 362.5h4v2.6h-4ZM1322 362.5h4v2.6h-4ZM1326 362.5h2v2.6h-2ZM1330 362.5h18v2.6h-18ZM1298 366.5h18v2.6h-18ZM1336 366.5h6v2.6h-6ZM1344 366.5h8v2.6h-8ZM1298 370.5h16v2.6h-16ZM1334 370.5h6v2.6h-6ZM1342 370.5h8v2.6h-8ZM1298 374.5h12v2.6h-12ZM1298 378.5h10v2.6h-10ZM1328 378.5h12v2.6h-12ZM1340 378.5h2v2.6h-2ZM1344 378.5h6v2.6h-6ZM1352 378.5h8v2.6h-8ZM1298 382.5h80v2.6h-80ZM1298 386.5h22v2.6h-22ZM1298 390.5h16v2.6h-16ZM1298 394.5h16v2.6h-16ZM1334 394.5h14v2.6h-14ZM1348 394.5h2v2.6h-2ZM1298 398.5h18v2.6h-18ZM1338 398.5h6v2.6h-6ZM1346 398.5h8v2.6h-8ZM1298 402.5h18v2.6h-18ZM1298 406.5h18v2.6h-18ZM1338 406.5h6v2.6h-6ZM1346 406.5h8v2.6h-8ZM1306 410.5h2v2.6h-2ZM1306 434.5h12v2.6h-12ZM1298 438.5h4v2.6h-4ZM1322 438.5h4v2.6h-4ZM1326 438.5h2v2.6h-2ZM1330 438.5h18v2.6h-18ZM1298 442.5h8v2.6h-8ZM1326 442.5h6v2.6h-6ZM1334 442.5h8v2.6h-8ZM1298 446.5h14v2.6h-14ZM1332 446.5h6v2.6h-6ZM1340 446.5h8v2.6h-8ZM1298 450.5h10v2.6h-10ZM1328 450.5h6v2.6h-6ZM1336 450.5h8v2.6h-8ZM1298 454.5h16v2.6h-16ZM1342 454.5h2v2.6h-2ZM1298 458.5h36v2.6h-36ZM1354 458.5h14v2.6h-14ZM1368 458.5h2v2.6h-2ZM1298 462.5h18v2.6h-18ZM1338 462.5h6v2.6h-6ZM1346 462.5h8v2.6h-8ZM1298 466.5h18v2.6h-18ZM1298 470.5h18v2.6h-18ZM1338 470.5h6v2.6h-6ZM1346 470.5h8v2.6h-8ZM1306 474.5h2v2.6h-2ZM1306 498.5h16v2.6h-16ZM1298 502.5h4v2.6h-4ZM1314 502.5h4v2.6h-4ZM1318 502.5h2v2.6h-2ZM1322 502.5h18v2.6h-18ZM1298 506.5h12v2.6h-12ZM1312 506.5h24v2.6h-24ZM1340 506.5h6v2.6h-6ZM1348 506.5h8v2.6h-8ZM1298 510.5h16v2.6h-16ZM1334 510.5h2v2.6h-2ZM1342 510.5h12v2.6h-12ZM1354 510.5h2v2.6h-2ZM1356 510.5h4v2.6h-4ZM1360 510.5h2v2.6h-2ZM1372 510.5h2v2.6h-2ZM1298 514.5h14v2.6h-14ZM1330 514.5h2v2.6h-2ZM1338 514.5h10v2.6h-10ZM1348 514.5h2v2.6h-2ZM1350 514.5h4v2.6h-4ZM1354 514.5h2v2.6h-2ZM1366 514.5h2v2.6h-2ZM1298 518.5h18v2.6h-18ZM1338 518.5h6v2.6h-6ZM1346 518.5h8v2.6h-8ZM1298 522.5h18v2.6h-18ZM1298 526.5h18v2.6h-18ZM1338 526.5h6v2.6h-6ZM1346 526.5h8v2.6h-8ZM1306 534.5h2v2.6h-2ZM1306 554.5h28v2.6h-28ZM1298 558.5h4v2.6h-4ZM1314 558.5h4v2.6h-4ZM1318 558.5h2v2.6h-2ZM1322 558.5h18v2.6h-18ZM1298 562.5h18v2.6h-18ZM1334 562.5h2v2.6h-2ZM1342 562.5h14v2.6h-14ZM1356 562.5h2v2.6h-2ZM1358 562.5h4v2.6h-4ZM1298 566.5h10v2.6h-10ZM1310 566.5h8v2.6h-8ZM1322 566.5h6v2.6h-6ZM1330 566.5h8v2.6h-8ZM1338 566.5h2v2.6h-2ZM1350 566.5h2v2.6h-2ZM1298 570.5h10v2.6h-10ZM1328 570.5h12v2.6h-12ZM1340 570.5h2v2.6h-2ZM1344 570.5h6v2.6h-6ZM1352 570.5h8v2.6h-8ZM1298 574.5h18v2.6h-18ZM1338 574.5h6v2.6h-6ZM1346 574.5h8v2.6h-8ZM1298 578.5h18v2.6h-18ZM1298 582.5h18v2.6h-18ZM1338 582.5h6v2.6h-6ZM1346 582.5h8v2.6h-8ZM1306 590.5h2v2.6h-2ZM1306 610.5h42v2.6h-42ZM1298 614.5h4v2.6h-4ZM1298 618.5h10v2.6h-10ZM1310 618.5h8v2.6h-8ZM1322 618.5h6v2.6h-6ZM1330 618.5h8v2.6h-8ZM1338 618.5h2v2.6h-2ZM1350 618.5h2v2.6h-2ZM1298 622.5h16v2.6h-16ZM1332 622.5h2v2.6h-2ZM1340 622.5h12v2.6h-12ZM1352 622.5h2v2.6h-2ZM1354 622.5h4v2.6h-4ZM1358 622.5h2v2.6h-2ZM1370 622.5h2v2.6h-2ZM1298 626.5h32v2.6h-32ZM1348 626.5h2v2.6h-2ZM1356 626.5h28v2.6h-28ZM1384 626.5h2v2.6h-2ZM1386 626.5h4v2.6h-4ZM1390 626.5h2v2.6h-2ZM1402 626.5h2v2.6h-2ZM1306 638.5h22v2.6h-22ZM1298 642.5h4v2.6h-4ZM1314 642.5h4v2.6h-4ZM1318 642.5h2v2.6h-2ZM1322 642.5h18v2.6h-18ZM1298 646.5h8v2.6h-8ZM1326 646.5h12v2.6h-12ZM1338 646.5h2v2.6h-2ZM1342 646.5h6v2.6h-6ZM1350 646.5h8v2.6h-8ZM1298 650.5h18v2.6h-18ZM1338 650.5h6v2.6h-6ZM1346 650.5h8v2.6h-8ZM1298 654.5h18v2.6h-18ZM1298 658.5h18v2.6h-18ZM1338 658.5h6v2.6h-6ZM1346 658.5h8v2.6h-8ZM1306 666.5h2v2.6h-2ZM1306 686.5h14v2.6h-14ZM1298 690.5h4v2.6h-4ZM1314 690.5h4v2.6h-4ZM1318 690.5h2v2.6h-2ZM1322 690.5h18v2.6h-18ZM1298 694.5h8v2.6h-8ZM1326 694.5h6v2.6h-6ZM1334 694.5h8v2.6h-8ZM1298 698.5h26v2.6h-26ZM1342 698.5h2v2.6h-2ZM1350 698.5h22v2.6h-22ZM1372 698.5h2v2.6h-2ZM1374 698.5h4v2.6h-4ZM1298 702.5h18v2.6h-18ZM1338 702.5h6v2.6h-6ZM1346 702.5h8v2.6h-8ZM1298 706.5h18v2.6h-18ZM1298 710.5h18v2.6h-18ZM1338 710.5h6v2.6h-6ZM1346 710.5h8v2.6h-8ZM1306 718.5h2v2.6h-2ZM1306 738.5h12v2.6h-12ZM1298 742.5h4v2.6h-4ZM1314 742.5h4v2.6h-4ZM1318 742.5h2v2.6h-2ZM1322 742.5h18v2.6h-18ZM1298 746.5h12v2.6h-12ZM1330 746.5h6v2.6h-6ZM1338 746.5h8v2.6h-8ZM1346 746.5h2v2.6h-2ZM1358 746.5h2v2.6h-2ZM1298 750.5h18v2.6h-18ZM1328 750.5h6v2.6h-6ZM1336 750.5h8v2.6h-8ZM1344 750.5h2v2.6h-2ZM1356 750.5h2v2.6h-2ZM1298 754.5h10v2.6h-10ZM1310 754.5h20v2.6h-20ZM1334 754.5h6v2.6h-6ZM1342 754.5h8v2.6h-8ZM1350 754.5h2v2.6h-2ZM1362 754.5h2v2.6h-2ZM1298 758.5h18v2.6h-18ZM1338 758.5h6v2.6h-6ZM1346 758.5h8v2.6h-8ZM1298 762.5h18v2.6h-18ZM1298 766.5h18v2.6h-18ZM1338 766.5h6v2.6h-6ZM1346 766.5h8v2.6h-8ZM1306 774.5h2v2.6h-2ZM1306 794.5h30v2.6h-30ZM1298 798.5h4v2.6h-4ZM1314 798.5h4v2.6h-4ZM1318 798.5h2v2.6h-2ZM1322 798.5h18v2.6h-18ZM1298 802.5h18v2.6h-18ZM1334 802.5h2v2.6h-2ZM1342 802.5h16v2.6h-16ZM1358 802.5h2v2.6h-2ZM1360 802.5h4v2.6h-4ZM1298 806.5h16v2.6h-16ZM1332 806.5h2v2.6h-2ZM1340 806.5h12v2.6h-12ZM1352 806.5h2v2.6h-2ZM1354 806.5h4v2.6h-4ZM1298 810.5h14v2.6h-14ZM1314 810.5h8v2.6h-8ZM1334 810.5h2v2.6h-2ZM1298 814.5h18v2.6h-18ZM1338 814.5h6v2.6h-6ZM1346 814.5h8v2.6h-8ZM1298 818.5h18v2.6h-18ZM1298 822.5h18v2.6h-18ZM1338 822.5h6v2.6h-6ZM1346 822.5h8v2.6h-8ZM1306 838.5h32v2.6h-32ZM1298 842.5h4v2.6h-4ZM1314 842.5h4v2.6h-4ZM1318 842.5h2v2.6h-2ZM1322 842.5h18v2.6h-18ZM1298 846.5h8v2.6h-8ZM1326 846.5h6v2.6h-6ZM1334 846.5h8v2.6h-8ZM1342 846.5h2v2.6h-2ZM1354 846.5h2v2.6h-2ZM1298 850.5h14v2.6h-14ZM1340 850.5h2v2.6h-2ZM1298 854.5h8v2.6h-8ZM1326 854.5h6v2.6h-6ZM1334 854.5h8v2.6h-8ZM1298 858.5h16v2.6h-16ZM1334 858.5h6v2.6h-6ZM1342 858.5h8v2.6h-8ZM1298 862.5h10v2.6h-10ZM1310 862.5h22v2.6h-22ZM1336 862.5h6v2.6h-6ZM1344 862.5h8v2.6h-8ZM1352 862.5h2v2.6h-2ZM1364 862.5h2v2.6h-2ZM1298 866.5h16v2.6h-16ZM1332 866.5h2v2.6h-2ZM1340 866.5h12v2.6h-12ZM1352 866.5h2v2.6h-2ZM1354 866.5h4v2.6h-4ZM1298 870.5h18v2.6h-18ZM1338 870.5h6v2.6h-6ZM1346 870.5h8v2.6h-8ZM1298 874.5h18v2.6h-18ZM1298 878.5h18v2.6h-18ZM1338 878.5h6v2.6h-6ZM1346 878.5h8v2.6h-8ZM1306 890.5h14v2.6h-14ZM1298 894.5h4v2.6h-4ZM1314 894.5h4v2.6h-4ZM1318 894.5h2v2.6h-2ZM1322 894.5h18v2.6h-18ZM1298 898.5h8v2.6h-8ZM1326 898.5h6v2.6h-6ZM1334 898.5h8v2.6h-8ZM1342 898.5h2v2.6h-2ZM1354 898.5h2v2.6h-2ZM1298 902.5h20v2.6h-20ZM1338 902.5h6v2.6h-6ZM1346 902.5h8v2.6h-8ZM1354 902.5h2v2.6h-2ZM1366 902.5h2v2.6h-2ZM1298 906.5h16v2.6h-16ZM1340 906.5h2v2.6h-2ZM1348 906.5h12v2.6h-12ZM1360 906.5h2v2.6h-2ZM1362 906.5h4v2.6h-4ZM1306 918.5h36v2.6h-36ZM1298 922.5h4v2.6h-4ZM1322 922.5h4v2.6h-4ZM1326 922.5h2v2.6h-2ZM1330 922.5h18v2.6h-18ZM1298 926.5h18v2.6h-18ZM1342 926.5h2v2.6h-2ZM1350 926.5h14v2.6h-14ZM1364 926.5h2v2.6h-2ZM1366 926.5h4v2.6h-4ZM1298 930.5h28v2.6h-28ZM1352 930.5h2v2.6h-2ZM1360 930.5h22v2.6h-22ZM1382 930.5h2v2.6h-2ZM1384 930.5h4v2.6h-4ZM1306 946.5h12v2.6h-12ZM1298 950.5h4v2.6h-4ZM1322 950.5h4v2.6h-4ZM1326 950.5h2v2.6h-2ZM1330 950.5h18v2.6h-18ZM1298 954.5h8v2.6h-8ZM1328 954.5h2v2.6h-2ZM1298 958.5h18v2.6h-18ZM1342 958.5h2v2.6h-2ZM1350 958.5h14v2.6h-14ZM1364 958.5h2v2.6h-2ZM1366 958.5h4v2.6h-4ZM1298 962.5h6v2.6h-6ZM1326 962.5h2v2.6h-2ZM1306 970.5h2v2.6h-2ZM1300 994.5h2v2.6h-2ZM1318 994.5h2v2.6h-2ZM1386 994.5h2v2.6h-2ZM1300 1002.5h2v2.6h-2ZM1350 1002.5h2v2.6h-2ZM1418 1002.5h2v2.6h-2Z" fill="#bdbdbd" fill-opacity="0.5"/><path d="M1324 258.5h2v2.6h-2ZM1294 294.5h2v2.6h-2ZM1330 302.5h2v2.6h-2ZM1294 314.5h2v2.6h-2ZM1326 322.5h2v2.6h-2ZM1294 334.5h2v2.6h-2ZM1328 342.5h2v2.6h-2ZM1294 350.5h2v2.6h-2ZM1318 358.5h2v2.6h-2ZM1294 426.5h2v2.6h-2ZM1320 434.5h2v2.6h-2ZM1294 490.5h2v2.6h-2ZM1324 498.5h2v2.6h-2ZM1294 546.5h2v2.6h-2ZM1336 554.5h2v2.6h-2ZM1294 602.5h2v2.6h-2ZM1350 610.5h2v2.6h-2ZM1294 630.5h2v2.6h-2ZM1330 638.5h2v2.6h-2ZM1294 678.5h2v2.6h-2ZM1322 686.5h2v2.6h-2ZM1294 730.5h2v2.6h-2ZM1320 738.5h2v2.6h-2ZM1294 786.5h2v2.6h-2ZM1338 794.5h2v2.6h-2ZM1294 830.5h2v2.6h-2ZM1340 838.5h2v2.6h-2ZM1294 882.5h2v2.6h-2ZM1322 890.5h2v2.6h-2ZM1294 910.5h2v2.6h-2ZM1344 918.5h2v2.6h-2ZM1294 934.5h2v2.6h-2ZM1320 946.5h2v2.6h-2ZM1294 986.5h2v2.6h-2Z" fill="#c8ac2a" fill-opacity="0.5"/><path d="M1328 262.5h24v2.6h-24ZM1310 266.5h6v2.6h-6ZM1298 274.5h12v2.6h-12ZM1312 274.5h6v2.6h-6ZM1320 274.5h6v2.6h-6ZM1328 274.5h22v2.6h-22ZM1352 274.5h4v2.6h-4ZM1358 274.5h14v2.6h-14ZM1374 274.5h4v2.6h-4ZM1380 274.5h14v2.6h-14ZM1396 274.5h10v2.6h-10ZM1298 282.5h8v2.6h-8ZM1308 282.5h6v2.6h-6ZM1316 282.5h4v2.6h-4ZM1322 282.5h22v2.6h-22ZM1346 282.5h4v2.6h-4ZM1352 282.5h4v2.6h-4ZM1358 282.5h8v2.6h-8ZM1368 282.5h4v2.6h-4ZM1374 282.5h14v2.6h-14ZM1390 282.5h4v2.6h-4ZM1396 282.5h14v2.6h-14ZM1412 282.5h14v2.6h-14ZM1298 290.5h6v2.6h-6ZM1310 410.5h6v2.6h-6ZM1298 414.5h10v2.6h-10ZM1310 414.5h10v2.6h-10ZM1322 414.5h16v2.6h-16ZM1340 414.5h6v2.6h-6ZM1348 414.5h24v2.6h-24ZM1374 414.5h6v2.6h-6ZM1382 414.5h6v2.6h-6ZM1390 414.5h24v2.6h-24ZM1416 414.5h4v2.6h-4ZM1422 414.5h4v2.6h-4ZM1298 422.5h6v2.6h-6ZM1346 454.5h6v2.6h-6ZM1354 454.5h12v2.6h-12ZM1368 454.5h4v2.6h-4ZM1374 454.5h8v2.6h-8ZM1384 454.5h8v2.6h-8ZM1394 454.5h12v2.6h-12ZM1408 454.5h10v2.6h-10ZM1420 454.5h6v2.6h-6ZM1310 474.5h6v2.6h-6ZM1298 478.5h10v2.6h-10ZM1310 478.5h10v2.6h-10ZM1322 478.5h16v2.6h-16ZM1340 478.5h6v2.6h-6ZM1348 478.5h24v2.6h-24ZM1374 478.5h6v2.6h-6ZM1382 478.5h6v2.6h-6ZM1390 478.5h14v2.6h-14ZM1406 478.5h10v2.6h-10ZM1418 478.5h8v2.6h-8ZM1298 486.5h6v2.6h-6ZM1376 510.5h10v2.6h-10ZM1388 510.5h8v2.6h-8ZM1398 510.5h6v2.6h-6ZM1406 510.5h16v2.6h-16ZM1424 510.5h2v2.6h-2ZM1370 514.5h10v2.6h-10ZM1382 514.5h12v2.6h-12ZM1396 514.5h6v2.6h-6ZM1404 514.5h8v2.6h-8ZM1414 514.5h12v2.6h-12ZM1310 534.5h6v2.6h-6ZM1302 538.5h10v2.6h-10ZM1314 538.5h10v2.6h-10ZM1326 538.5h22v2.6h-22ZM1350 538.5h4v2.6h-4ZM1356 538.5h8v2.6h-8ZM1366 538.5h10v2.6h-10ZM1378 538.5h6v2.6h-6ZM1386 538.5h10v2.6h-10ZM1398 538.5h4v2.6h-4ZM1404 538.5h6v2.6h-6ZM1412 538.5h12v2.6h-12ZM1302 542.5h6v2.6h-6ZM1354 566.5h8v2.6h-8ZM1364 566.5h14v2.6h-14ZM1380 566.5h10v2.6h-10ZM1392 566.5h6v2.6h-6ZM1400 566.5h6v2.6h-6ZM1408 566.5h18v2.6h-18ZM1310 590.5h6v2.6h-6ZM1298 594.5h10v2.6h-10ZM1310 594.5h10v2.6h-10ZM1322 594.5h16v2.6h-16ZM1340 594.5h4v2.6h-4ZM1346 594.5h10v2.6h-10ZM1358 594.5h6v2.6h-6ZM1366 594.5h28v2.6h-28ZM1396 594.5h22v2.6h-22ZM1420 594.5h6v2.6h-6ZM1302 598.5h6v2.6h-6ZM1354 618.5h8v2.6h-8ZM1364 618.5h10v2.6h-10ZM1376 618.5h14v2.6h-14ZM1392 618.5h10v2.6h-10ZM1404 618.5h6v2.6h-6ZM1412 618.5h6v2.6h-6ZM1420 618.5h6v2.6h-6ZM1374 622.5h10v2.6h-10ZM1386 622.5h28v2.6h-28ZM1416 622.5h6v2.6h-6ZM1424 622.5h2v2.6h-2ZM1406 626.5h10v2.6h-10ZM1418 626.5h8v2.6h-8ZM1310 666.5h6v2.6h-6ZM1306 670.5h4v2.6h-4ZM1312 670.5h10v2.6h-10ZM1324 670.5h8v2.6h-8ZM1336 670.5h6v2.6h-6ZM1344 670.5h14v2.6h-14ZM1360 670.5h2v2.6h-2ZM1364 670.5h20v2.6h-20ZM1386 670.5h6v2.6h-6ZM1394 670.5h20v2.6h-20ZM1416 670.5h10v2.6h-10ZM1302 674.5h6v2.6h-6ZM1310 718.5h6v2.6h-6ZM1306 722.5h4v2.6h-4ZM1312 722.5h10v2.6h-10ZM1324 722.5h12v2.6h-12ZM1338 722.5h6v2.6h-6ZM1346 722.5h14v2.6h-14ZM1362 722.5h2v2.6h-2ZM1366 722.5h20v2.6h-20ZM1388 722.5h20v2.6h-20ZM1410 722.5h4v2.6h-4ZM1416 722.5h10v2.6h-10ZM1302 726.5h6v2.6h-6ZM1362 746.5h16v2.6h-16ZM1380 746.5h2v2.6h-2ZM1384 746.5h16v2.6h-16ZM1402 746.5h4v2.6h-4ZM1408 746.5h10v2.6h-10ZM1420 746.5h6v2.6h-6ZM1360 750.5h24v2.6h-24ZM1386 750.5h4v2.6h-4ZM1392 750.5h16v2.6h-16ZM1410 750.5h2v2.6h-2ZM1414 750.5h12v2.6h-12ZM1366 754.5h8v2.6h-8ZM1376 754.5h4v2.6h-4ZM1382 754.5h12v2.6h-12ZM1310 774.5h6v2.6h-6ZM1302 778.5h4v2.6h-4ZM1308 778.5h10v2.6h-10ZM1320 778.5h14v2.6h-14ZM1336 778.5h6v2.6h-6ZM1344 778.5h24v2.6h-24ZM1370 778.5h24v2.6h-24ZM1396 778.5h8v2.6h-8ZM1406 778.5h20v2.6h-20ZM1302 782.5h6v2.6h-6ZM1338 810.5h8v2.6h-8ZM1348 810.5h24v2.6h-24ZM1374 810.5h30v2.6h-30ZM1406 810.5h18v2.6h-18ZM1358 846.5h8v2.6h-8ZM1368 846.5h4v2.6h-4ZM1374 846.5h20v2.6h-20ZM1344 850.5h22v2.6h-22ZM1368 850.5h20v2.6h-20ZM1368 862.5h6v2.6h-6ZM1376 862.5h8v2.6h-8ZM1386 862.5h4v2.6h-4ZM1392 862.5h18v2.6h-18ZM1412 862.5h14v2.6h-14ZM1358 898.5h6v2.6h-6ZM1366 898.5h6v2.6h-6ZM1374 898.5h4v2.6h-4ZM1380 898.5h16v2.6h-16ZM1368 902.5h10v2.6h-10ZM1380 902.5h16v2.6h-16ZM1398 902.5h4v2.6h-4ZM1404 902.5h4v2.6h-4ZM1410 902.5h14v2.6h-14ZM1332 954.5h6v2.6h-6ZM1340 954.5h6v2.6h-6ZM1348 954.5h4v2.6h-4ZM1354 954.5h12v2.6h-12ZM1330 962.5h12v2.6h-12ZM1344 962.5h6v2.6h-6ZM1352 962.5h12v2.6h-12ZM1366 962.5h18v2.6h-18ZM1386 962.5h4v2.6h-4ZM1392 962.5h18v2.6h-18ZM1310 970.5h6v2.6h-6ZM1298 974.5h10v2.6h-10ZM1310 974.5h10v2.6h-10ZM1322 974.5h20v2.6h-20ZM1344 974.5h6v2.6h-6ZM1352 974.5h18v2.6h-18ZM1298 978.5h10v2.6h-10ZM1310 978.5h16v2.6h-16ZM1328 978.5h16v2.6h-16ZM1298 982.5h6v2.6h-6ZM1304 994.5h14v2.6h-14ZM1320 994.5h14v2.6h-14ZM1340 994.5h46v2.6h-46ZM1388 994.5h20v2.6h-20ZM1304 1002.5h46v2.6h-46ZM1352 1002.5h14v2.6h-14ZM1372 1002.5h46v2.6h-46ZM1420 1002.5h6v2.6h-6Z" fill="#ce9178" fill-opacity="0.5"/><path d="M1304 362.5h14v2.6h-14ZM1318 366.5h14v2.6h-14ZM1316 370.5h14v2.6h-14ZM1312 374.5h14v2.6h-14ZM1310 378.5h14v2.6h-14ZM1380 382.5h14v2.6h-14ZM1322 386.5h14v2.6h-14ZM1316 390.5h14v2.6h-14ZM1316 394.5h14v2.6h-14ZM1352 394.5h10v2.6h-10ZM1318 398.5h16v2.6h-16ZM1318 402.5h16v2.6h-16ZM1318 406.5h16v2.6h-16ZM1304 438.5h14v2.6h-14ZM1308 442.5h14v2.6h-14ZM1314 446.5h14v2.6h-14ZM1310 450.5h14v2.6h-14ZM1316 454.5h14v2.6h-14ZM1336 458.5h14v2.6h-14ZM1372 458.5h10v2.6h-10ZM1318 462.5h16v2.6h-16ZM1318 466.5h16v2.6h-16ZM1318 470.5h16v2.6h-16ZM1304 502.5h6v2.6h-6ZM1316 510.5h6v2.6h-6ZM1314 514.5h6v2.6h-6ZM1318 518.5h16v2.6h-16ZM1318 522.5h16v2.6h-16ZM1318 526.5h16v2.6h-16ZM1304 558.5h6v2.6h-6ZM1318 562.5h6v2.6h-6ZM1310 570.5h14v2.6h-14ZM1318 574.5h16v2.6h-16ZM1318 578.5h16v2.6h-16ZM1318 582.5h16v2.6h-16ZM1304 614.5h6v2.6h-6ZM1316 622.5h6v2.6h-6ZM1332 626.5h6v2.6h-6ZM1304 642.5h6v2.6h-6ZM1308 646.5h14v2.6h-14ZM1318 650.5h16v2.6h-16ZM1318 654.5h16v2.6h-16ZM1318 658.5h16v2.6h-16ZM1304 690.5h6v2.6h-6ZM1308 694.5h14v2.6h-14ZM1326 698.5h6v2.6h-6ZM1318 702.5h16v2.6h-16ZM1318 706.5h16v2.6h-16ZM1318 710.5h16v2.6h-16ZM1304 742.5h6v2.6h-6ZM1312 746.5h14v2.6h-14ZM1318 750.5h6v2.6h-6ZM1318 758.5h16v2.6h-16ZM1318 762.5h16v2.6h-16ZM1318 766.5h16v2.6h-16ZM1304 798.5h6v2.6h-6ZM1318 802.5h6v2.6h-6ZM1316 806.5h6v2.6h-6ZM1318 814.5h16v2.6h-16ZM1318 818.5h16v2.6h-16ZM1318 822.5h16v2.6h-16ZM1304 842.5h6v2.6h-6ZM1308 846.5h14v2.6h-14ZM1314 850.5h14v2.6h-14ZM1308 854.5h14v2.6h-14ZM1316 858.5h14v2.6h-14ZM1316 866.5h6v2.6h-6ZM1318 870.5h16v2.6h-16ZM1318 874.5h16v2.6h-16ZM1318 878.5h16v2.6h-16ZM1304 894.5h6v2.6h-6ZM1308 898.5h14v2.6h-14ZM1320 902.5h14v2.6h-14ZM1316 906.5h14v2.6h-14ZM1304 922.5h14v2.6h-14ZM1318 926.5h14v2.6h-14ZM1328 930.5h14v2.6h-14ZM1304 950.5h14v2.6h-14ZM1308 954.5h8v2.6h-8ZM1318 958.5h14v2.6h-14ZM1306 962.5h8v2.6h-8Z" fill="#569cd6" fill-opacity="0.5"/><path d="M1320 362.5h2v2.6h-2ZM1348 362.5h2v2.6h-2ZM1334 366.5h2v2.6h-2ZM1352 366.5h2v2.6h-2ZM1332 370.5h2v2.6h-2ZM1350 370.5h2v2.6h-2ZM1326 378.5h2v2.6h-2ZM1360 378.5h2v2.6h-2ZM1332 394.5h2v2.6h-2ZM1362 394.5h2v2.6h-2ZM1336 398.5h2v2.6h-2ZM1354 398.5h2v2.6h-2ZM1336 406.5h2v2.6h-2ZM1354 406.5h2v2.6h-2ZM1320 438.5h2v2.6h-2ZM1348 438.5h2v2.6h-2ZM1324 442.5h2v2.6h-2ZM1342 442.5h2v2.6h-2ZM1330 446.5h2v2.6h-2ZM1348 446.5h2v2.6h-2ZM1326 450.5h2v2.6h-2ZM1344 450.5h2v2.6h-2ZM1332 454.5h2v2.6h-2ZM1352 458.5h2v2.6h-2ZM1382 458.5h2v2.6h-2ZM1336 462.5h2v2.6h-2ZM1354 462.5h2v2.6h-2ZM1336 470.5h2v2.6h-2ZM1354 470.5h2v2.6h-2ZM1312 502.5h2v2.6h-2ZM1340 502.5h2v2.6h-2ZM1338 506.5h2v2.6h-2ZM1356 506.5h2v2.6h-2ZM1326 510.5h2v2.6h-2ZM1322 514.5h2v2.6h-2ZM1336 518.5h2v2.6h-2ZM1354 518.5h2v2.6h-2ZM1336 526.5h2v2.6h-2ZM1354 526.5h2v2.6h-2ZM1312 558.5h2v2.6h-2ZM1340 558.5h2v2.6h-2ZM1326 562.5h2v2.6h-2ZM1362 562.5h2v2.6h-2ZM1320 566.5h2v2.6h-2ZM1326 570.5h2v2.6h-2ZM1360 570.5h2v2.6h-2ZM1336 574.5h2v2.6h-2ZM1354 574.5h2v2.6h-2ZM1336 582.5h2v2.6h-2ZM1354 582.5h2v2.6h-2ZM1320 618.5h2v2.6h-2ZM1324 622.5h2v2.6h-2ZM1340 626.5h2v2.6h-2ZM1312 642.5h2v2.6h-2ZM1340 642.5h2v2.6h-2ZM1324 646.5h2v2.6h-2ZM1358 646.5h2v2.6h-2ZM1336 650.5h2v2.6h-2ZM1354 650.5h2v2.6h-2ZM1336 658.5h2v2.6h-2ZM1354 658.5h2v2.6h-2ZM1312 690.5h2v2.6h-2ZM1340 690.5h2v2.6h-2ZM1324 694.5h2v2.6h-2ZM1342 694.5h2v2.6h-2ZM1334 698.5h2v2.6h-2ZM1378 698.5h2v2.6h-2ZM1336 702.5h2v2.6h-2ZM1354 702.5h2v2.6h-2ZM1336 710.5h2v2.6h-2ZM1354 710.5h2v2.6h-2ZM1312 742.5h2v2.6h-2ZM1340 742.5h2v2.6h-2ZM1328 746.5h2v2.6h-2ZM1326 750.5h2v2.6h-2ZM1332 754.5h2v2.6h-2ZM1394 754.5h2v2.6h-2ZM1336 758.5h2v2.6h-2ZM1354 758.5h2v2.6h-2ZM1336 766.5h2v2.6h-2ZM1354 766.5h2v2.6h-2ZM1312 798.5h2v2.6h-2ZM1340 798.5h2v2.6h-2ZM1326 802.5h2v2.6h-2ZM1364 802.5h2v2.6h-2ZM1324 806.5h2v2.6h-2ZM1358 806.5h2v2.6h-2ZM1324 810.5h2v2.6h-2ZM1336 814.5h2v2.6h-2ZM1354 814.5h2v2.6h-2ZM1336 822.5h2v2.6h-2ZM1354 822.5h2v2.6h-2ZM1312 842.5h2v2.6h-2ZM1340 842.5h2v2.6h-2ZM1324 846.5h2v2.6h-2ZM1394 846.5h2v2.6h-2ZM1330 850.5h2v2.6h-2ZM1388 850.5h2v2.6h-2ZM1324 854.5h2v2.6h-2ZM1342 854.5h2v2.6h-2ZM1332 858.5h2v2.6h-2ZM1350 858.5h2v2.6h-2ZM1334 862.5h2v2.6h-2ZM1324 866.5h2v2.6h-2ZM1358 866.5h2v2.6h-2ZM1336 870.5h2v2.6h-2ZM1354 870.5h2v2.6h-2ZM1336 878.5h2v2.6h-2ZM1354 878.5h2v2.6h-2ZM1312 894.5h2v2.6h-2ZM1340 894.5h2v2.6h-2ZM1324 898.5h2v2.6h-2ZM1396 898.5h2v2.6h-2ZM1336 902.5h2v2.6h-2ZM1332 906.5h2v2.6h-2ZM1366 906.5h2v2.6h-2ZM1320 922.5h2v2.6h-2ZM1348 922.5h2v2.6h-2ZM1334 926.5h2v2.6h-2ZM1370 926.5h2v2.6h-2ZM1344 930.5h2v2.6h-2ZM1388 930.5h2v2.6h-2ZM1320 950.5h2v2.6h-2ZM1348 950.5h2v2.6h-2ZM1318 954.5h2v2.6h-2ZM1366 954.5h2v2.6h-2ZM1334 958.5h2v2.6h-2ZM1370 958.5h2v2.6h-2ZM1316 962.5h2v2.6h-2ZM1410 962.5h2v2.6h-2Z" fill="#a865a5" fill-opacity="0.5"/></svg><div class="a" style="left:1283.0px;top:258.0px;width:3.0px;height:1932.0px;background:#141414;"></div><div class="a" style="left:1426.0px;top:258.0px;width:1.5px;height:1932.0px;background:#151515;"></div><div class="a" style="left:1426.0px;top:1630.0px;width:28.0px;height:4.0px;background:#5a5a5a;"></div><div class="a" style="left:1456.0px;top:143.0px;width:2000.0px;height:69.0px;background:#181818;"></div><div class="a" style="left:1456.0px;top:210.0px;width:2000.0px;height:2.0px;background:#2b2b2b;"></div><div class="a" style="left:1454.0px;top:143.0px;width:2.0px;height:2047.0px;background:#383838;"></div><div class="a" style="left:1827.0px;top:143.0px;width:2.0px;height:69.0px;background:#2b2b2b;"></div><svg class="a" style="left:1475px;top:164px" width="30" height="28" fill="none"><rect x="1.5" y="1.5" width="27" height="24" rx="2.5" stroke="#9d9d9d" stroke-width="2.2"/><path d="M6 8 H24 M6 13.5 H13 M6 19 H13" stroke="#9d9d9d" stroke-width="2.2"/><rect x="16" y="13" width="8" height="7" stroke="#9d9d9d" stroke-width="2"/></svg><div class="t" style="left:1519.0px;top:167.0px;font-size:25.83px;color:#9d9d9d;">Preview README.md</div><div class="a" style="left:2633.0px;top:143.0px;width:2.0px;height:69.0px;background:#2b2b2b;"></div><svg class="a" style="left:1855px;top:164px" width="30" height="30" fill="none"><path d="M3 13 H12 V27 H3 a1.5 1.5 0 0 1 -1.5 -1.5 V14.5 A1.5 1.5 0 0 1 3 13 Z M12 20 H21 V25.5 a1.5 1.5 0 0 1 -1.5 1.5 H12 M1.5 20 H12" stroke="#9d9d9d" stroke-width="2"/><rect x="17" y="2" width="10" height="10" rx="1.5" stroke="#9d9d9d" stroke-width="2"/></svg><div class="t" style="left:1895.0px;top:166.1px;font-size:26.95px;color:#9d9d9d;">Extension: DBML Entity-Relationship Diagrams visualizer</div><div class="a" style="left:2635.0px;top:143.0px;width:403.0px;height:69.0px;background:#1f1f1f;"></div><div class="a" style="left:2635.0px;top:143.0px;width:403.0px;height:2.0px;background:#0078d4;"></div><div class="a" style="left:3038.0px;top:143.0px;width:2.0px;height:69.0px;background:#2b2b2b;"></div><svg class="a" style="left:2657px;top:164px" width="30" height="28" fill="none"><rect x="1.5" y="1.5" width="27" height="24" rx="2.5" stroke="#d4d4d4" stroke-width="2.2"/><path d="M6 8 H24 M6 13.5 H13 M6 19 H13" stroke="#d4d4d4" stroke-width="2.2"/><rect x="16" y="13" width="8" height="7" stroke="#d4d4d4" stroke-width="2"/></svg><div class="t" style="left:2701.0px;top:166.5px;font-size:26.43px;color:#ffffff;">DBLM Diagram Preview</div><svg class="a" style="left:3000px;top:169px" width="24" height="22" fill="none"><path d="M3 2 L21 20 M21 2 L3 20" stroke="#cccccc" stroke-width="2.4"/></svg><svg class="a" style="left:3290px;top:162px" width="140" height="34" fill="none"><path d="M6 3 L24 16.5 L6 30 Z" stroke="#cccccc" stroke-width="2.3" stroke-linejoin="round"/><rect x="57" y="4" width="24" height="25" rx="2" stroke="#cccccc" stroke-width="2.3"/><path d="M69 4 V29" stroke="#cccccc" stroke-width="2.3"/><circle cx="109.5" cy="17" r="2.6" fill="#cccccc"/><circle cx="119" cy="17" r="2.6" fill="#cccccc"/><circle cx="128.5" cy="17" r="2.6" fill="#cccccc"/></svg><div class="a" style="left:1456.0px;top:212.0px;width:2000.0px;height:1978.0px;background:#1a1a1a;"></div><div class="a" style="left:1456.0px;top:212.0px;width:38.0px;height:1958.0px;background:#1f1f1f;"></div><svg class="a" style="left:0;top:0" width="3456" height="2234"><path d="M1840.2 598.4 C2097.2 598.4 2097.2 383.9 2354.3 383.9" stroke="#8f8f8f" stroke-width="1.8" fill="none"/><path stroke="#8f8f8f" stroke-width="2" fill="none" d="M1832.2 593.35 L1840.2 598.35 L1832.2 603.35 M1840.2 598.35 H1832.2"/><path stroke="#8f8f8f" stroke-width="2" fill="none" d="M2354.3 383.95 H2362.3 M2354.3 380.75 V387.15"/><path d="M2354.3 442.8 C2226.5 442.8 2226.5 686.0 2098.7 686.0" stroke="#8f8f8f" stroke-width="1.8" fill="none"/><path stroke="#8f8f8f" stroke-width="2" fill="none" d="M2362.3 437.75 L2354.3 442.75 L2362.3 447.75 M2354.3 442.75 H2362.3"/><path stroke="#8f8f8f" stroke-width="2" fill="none" d="M2098.7 685.95 H2090.7 M2098.7 682.75 V689.1500000000001"/><path d="M2098.7 686.0 C2184.3 686.0 2184.3 815.5 2269.9 815.5" stroke="#8f8f8f" stroke-width="1.8" fill="none"/><path stroke="#8f8f8f" stroke-width="2" fill="none" d="M2098.7 685.95 H2090.7 M2098.7 682.75 V689.1500000000001"/><path stroke="#8f8f8f" stroke-width="2" fill="none" d="M2277.9 810.45 L2269.9 815.45 L2277.9 820.45 M2269.9 815.45 H2277.9"/><path d="M2269.9 786.1 C2168.4 786.1 2308.7 1083.5 2347.4 1083.5" stroke="#8f8f8f" stroke-width="1.8" fill="none"/><path stroke="#8f8f8f" stroke-width="2" fill="none" d="M2277.9 781.0500000000001 L2269.9 786.0500000000001 L2277.9 791.0500000000001 M2269.9 786.0500000000001 H2277.9"/><path stroke="#8f8f8f" stroke-width="2" fill="none" d="M2347.4 1083.45 H2355.4 M2347.4 1080.25 V1086.65"/><path d="M2265.4 1152.8 C2306.4 1152.8 2306.4 1083.5 2347.4 1083.5" stroke="#8f8f8f" stroke-width="1.8" fill="none"/><path stroke="#8f8f8f" stroke-width="2" fill="none" d="M2257.4 1147.75 L2265.4 1152.75 L2257.4 1157.75 M2265.4 1152.75 H2257.4"/><path stroke="#8f8f8f" stroke-width="2" fill="none" d="M2347.4 1083.45 H2355.4 M2347.4 1080.25 V1086.65"/><path d="M2539.8 1171.7 C2581.2 1171.7 2581.2 1376.0 2622.5 1376.0" stroke="#8f8f8f" stroke-width="1.8" fill="none"/><path stroke="#8f8f8f" stroke-width="2" fill="none" d="M2531.8 1166.65 L2539.8 1171.65 L2531.8 1176.65 M2539.8 1171.65 H2531.8"/><path stroke="#8f8f8f" stroke-width="2" fill="none" d="M2622.5 1376.05 H2630.5 M2622.5 1372.85 V1379.25"/><path d="M2020.4 1287.9 C2321.4 1287.9 2321.4 1376.0 2622.5 1376.0" stroke="#8f8f8f" stroke-width="1.8" fill="none"/><path stroke="#8f8f8f" stroke-width="2" fill="none" d="M2012.4 1282.9499999999998 L2020.4 1287.9499999999998 L2012.4 1292.9499999999998 M2020.4 1287.9499999999998 H2012.4"/><path stroke="#8f8f8f" stroke-width="2" fill="none" d="M2622.5 1376.05 H2630.5 M2622.5 1372.85 V1379.25"/><path d="M1964.5 1707.5 C2293.5 1707.5 2293.5 1376.0 2622.5 1376.0" stroke="#8f8f8f" stroke-width="1.8" fill="none"/><path stroke="#8f8f8f" stroke-width="2" fill="none" d="M1956.5 1702.55 L1964.5 1707.55 L1956.5 1712.55 M1964.5 1707.55 H1956.5"/><path stroke="#8f8f8f" stroke-width="2" fill="none" d="M2622.5 1376.05 H2630.5 M2622.5 1372.85 V1379.25"/><path d="M2573.8 667.0 C2493.4 667.0 2598.2 1376.0 2622.5 1376.0" stroke="#8f8f8f" stroke-width="1.8" fill="none"/><path stroke="#8f8f8f" stroke-width="2" fill="none" d="M2581.8 661.95 L2573.8 666.95 L2581.8 671.95 M2573.8 666.95 H2581.8"/><path stroke="#8f8f8f" stroke-width="2" fill="none" d="M2622.5 1376.05 H2630.5 M2622.5 1372.85 V1379.25"/><path d="M2766.2 608.2 C2855.0 608.2 2855.0 685.8 2943.8 685.8" stroke="#8f8f8f" stroke-width="1.8" fill="none"/><path stroke="#8f8f8f" stroke-width="2" fill="none" d="M2766.2000000000003 608.1500000000001 H2758.2000000000003 M2766.2000000000003 604.95 V611.3500000000001"/><path stroke="#8f8f8f" stroke-width="2" fill="none" d="M2951.8 680.75 L2943.8 685.75 L2951.8 690.75 M2943.8 685.75 H2951.8"/><path d="M2943.8 715.1 C2818.0 715.1 3003.4 1233.0 3063.0 1233.0" stroke="#8f8f8f" stroke-width="1.8" fill="none"/><path stroke="#8f8f8f" stroke-width="2" fill="none" d="M2951.8 710.15 L2943.8 715.15 L2951.8 720.15 M2943.8 715.15 H2951.8"/><path stroke="#8f8f8f" stroke-width="2" fill="none" d="M3063 1232.95 H3071 M3063 1229.75 V1236.15"/><path d="M1647.8 569.0 C1519.3 569.0 1709.9 1737.0 1772.1 1737.0" stroke="#8f8f8f" stroke-width="1.8" fill="none"/><path stroke="#8f8f8f" stroke-width="2" fill="none" d="M1647.8 568.95 H1655.8 M1647.8 565.75 V572.1500000000001"/><path stroke="#8f8f8f" stroke-width="2" fill="none" d="M1780.1 1731.95 L1772.1 1736.95 L1780.1 1741.95 M1772.1 1736.95 H1780.1"/><path d="M2766.2 696.4 C2901.4 696.4 2901.4 1740.7 3036.5 1740.7" stroke="#8b5cf6" stroke-width="1.8" fill="none"/><path stroke="#8b5cf6" stroke-width="2" fill="none" d="M2758.2000000000003 691.35 L2766.2000000000003 696.35 L2758.2000000000003 701.35 M2766.2000000000003 696.35 H2758.2000000000003"/><path stroke="#8b5cf6" stroke-width="2" fill="none" d="M3036.5 1740.65 H3044.5 M3036.5 1737.45 V1743.8500000000001"/><path d="M1964.5 1707.5 C2500.5 1707.5 2500.5 1858.2 3036.5 1858.2" stroke="#8b5cf6" stroke-width="1.8" fill="none"/><path stroke="#8b5cf6" stroke-width="2" fill="none" d="M1956.5 1702.55 L1964.5 1707.55 L1956.5 1712.55 M1964.5 1707.55 H1956.5"/><path stroke="#8b5cf6" stroke-width="2" fill="none" d="M3036.5 1858.25 H3044.5 M3036.5 1855.05 V1861.45"/><path d="M1772.1 1678.1499999999999 C1781.1 1682.1499999999999 1781.1 1703.55 1772.1 1707.55" stroke="#8f8f8f" stroke-width="2" fill="none"/><path stroke="#8f8f8f" stroke-width="2" fill="none" d="M1772.1 1678.1499999999999 H1780.1 M1772.1 1674.9499999999998 V1681.35"/><path stroke="#8f8f8f" stroke-width="2" fill="none" d="M1780.1 1702.55 L1772.1 1707.55 L1780.1 1712.55 M1772.1 1707.55 H1780.1"/></svg><div class="a" style="left:2362.3px;top:334px;width:176.4px;height:219.65px"><div class="a" style="left:0;top:0;width:176.4px;height:6.2px;background:#2ab09c;border-radius:5px 5px 0 0"></div><div class="a" style="left:0;top:6.2px;width:176.4px;height:29.05px;background:#1d1d1d"></div><div class="a dh" style="left:10px;top:6.2px;width:156.4px;height:29.05px;line-height:27.55px">modules</div><div class="a" style="left:0;top:35.25px;width:176.4px;height:184.40px;background:#2e2e2e;border-radius:0 0 7px 7px"></div><div class="a df" style="left:8px;top:35.25px;height:29.4px;line-height:31.4px;color:#ededed;font-weight:bold;">id</div><div class="a df" style="right:8px;top:35.25px;height:29.4px;line-height:31.4px;color:#a6a6a6;font-weight:bold;">int</div><div class="a df" style="left:8px;top:64.65px;height:29.4px;line-height:31.4px;color:#ededed;">name</div><div class="a df" style="right:8px;top:64.65px;height:29.4px;line-height:31.4px;color:#a6a6a6;">varchar</div><div class="a df" style="left:8px;top:94.05px;height:29.4px;line-height:31.4px;color:#ededed;">department_id</div><div class="a df" style="right:8px;top:94.05px;height:29.4px;line-height:31.4px;color:#a6a6a6;">int</div><div class="a df" style="left:8px;top:123.45px;height:29.4px;line-height:31.4px;color:#ededed;">createdAt</div><div class="a df" style="right:8px;top:123.45px;height:29.4px;line-height:31.4px;color:#a6a6a6;">datetime</div><div class="a df" style="left:8px;top:152.85px;height:29.4px;line-height:31.4px;color:#ededed;">deletedAt</div><div class="a df" style="right:8px;top:152.85px;height:29.4px;line-height:31.4px;color:#a6a6a6;">datetime</div><div class="a df" style="left:8px;top:182.25px;height:29.4px;line-height:31.4px;color:#ededed;">updatedAt</div><div class="a df" style="right:8px;top:182.25px;height:29.4px;line-height:31.4px;color:#a6a6a6;">datetime</div></div><div class="a" style="left:1655.8px;top:519px;width:176.4px;height:249.05px"><div class="a" style="left:0;top:0;width:176.4px;height:6.2px;background:#9a5cf5;border-radius:5px 5px 0 0"></div><div class="a" style="left:0;top:6.2px;width:176.4px;height:29.05px;background:#1d1d1d"></div><div class="a dh" style="left:10px;top:6.2px;width:156.4px;height:29.05px;line-height:27.55px">configurations</div><div class="a" style="left:0;top:35.25px;width:176.4px;height:213.80px;background:#2e2e2e;border-radius:0 0 7px 7px"></div><div class="a df" style="left:8px;top:35.25px;height:29.4px;line-height:31.4px;color:#ededed;font-weight:bold;">id</div><div class="a df" style="right:8px;top:35.25px;height:29.4px;line-height:31.4px;color:#a6a6a6;font-weight:bold;">int</div><div class="a df" style="left:8px;top:64.65px;height:29.4px;line-height:31.4px;color:#ededed;">module_id</div><div class="a df" style="right:8px;top:64.65px;height:29.4px;line-height:31.4px;color:#a6a6a6;">int</div><div class="a df" style="left:8px;top:94.05px;height:29.4px;line-height:31.4px;color:#ededed;">value</div><div class="a df" style="right:8px;top:94.05px;height:29.4px;line-height:31.4px;color:#a6a6a6;">json</div><div class="a df" style="left:8px;top:123.45px;height:29.4px;line-height:31.4px;color:#ededed;">label</div><div class="a df" style="right:8px;top:123.45px;height:29.4px;line-height:31.4px;color:#a6a6a6;">varchar</div><div class="a df" style="left:8px;top:152.85px;height:29.4px;line-height:31.4px;color:#ededed;">createdAt</div><div class="a df" style="right:8px;top:152.85px;height:29.4px;line-height:31.4px;color:#a6a6a6;">datetime</div><div class="a df" style="left:8px;top:182.25px;height:29.4px;line-height:31.4px;color:#ededed;">deletedAt</div><div class="a df" style="right:8px;top:182.25px;height:29.4px;line-height:31.4px;color:#a6a6a6;">datetime</div><div class="a df" style="left:8px;top:211.65px;height:29.4px;line-height:31.4px;color:#ededed;">updatedAt</div><div class="a df" style="right:8px;top:211.65px;height:29.4px;line-height:31.4px;color:#a6a6a6;">datetime</div></div><div class="a" style="left:1914.3px;top:636px;width:176.4px;height:190.25px"><div class="a" style="left:0;top:0;width:176.4px;height:6.2px;background:#925cf5;border-radius:5px 5px 0 0"></div><div class="a" style="left:0;top:6.2px;width:176.4px;height:29.05px;background:#1d1d1d"></div><div class="a dh" style="left:10px;top:6.2px;width:156.4px;height:29.05px;line-height:27.55px">departments</div><div class="a" style="left:0;top:35.25px;width:176.4px;height:155.00px;background:#2e2e2e;border-radius:0 0 7px 7px"></div><div class="a df" style="left:8px;top:35.25px;height:29.4px;line-height:31.4px;color:#ededed;font-weight:bold;">id</div><div class="a df" style="right:8px;top:35.25px;height:29.4px;line-height:31.4px;color:#a6a6a6;font-weight:bold;">int</div><div class="a df" style="left:8px;top:64.65px;height:29.4px;line-height:31.4px;color:#ededed;">name</div><div class="a df" style="right:8px;top:64.65px;height:29.4px;line-height:31.4px;color:#a6a6a6;">varchar</div><div class="a df" style="left:8px;top:94.05px;height:29.4px;line-height:31.4px;color:#ededed;">createdAt</div><div class="a df" style="right:8px;top:94.05px;height:29.4px;line-height:31.4px;color:#a6a6a6;">datetime</div><div class="a df" style="left:8px;top:123.45px;height:29.4px;line-height:31.4px;color:#ededed;">deletedAt</div><div class="a df" style="right:8px;top:123.45px;height:29.4px;line-height:31.4px;color:#a6a6a6;">datetime</div><div class="a df" style="left:8px;top:152.85px;height:29.4px;line-height:31.4px;color:#ededed;">updatedAt</div><div class="a df" style="right:8px;top:152.85px;height:29.4px;line-height:31.4px;color:#a6a6a6;">datetime</div></div><div class="a" style="left:2277.9px;top:706.7px;width:176.4px;height:131.45px"><div class="a" style="left:0;top:0;width:176.4px;height:6.2px;background:#925cf5;border-radius:5px 5px 0 0"></div><div class="a" style="left:0;top:6.2px;width:176.4px;height:29.05px;background:#1d1d1d"></div><div class="a dh" style="left:10px;top:6.2px;width:156.4px;height:29.05px;line-height:27.55px">department_folders</div><div class="a" style="left:0;top:35.25px;width:176.4px;height:96.20px;background:#2e2e2e;border-radius:0 0 7px 7px"></div><div class="a df" style="left:8px;top:35.25px;height:29.4px;line-height:31.4px;color:#ededed;font-weight:bold;">id</div><div class="a df" style="right:8px;top:35.25px;height:29.4px;line-height:31.4px;color:#a6a6a6;font-weight:bold;">integer</div><div class="a df" style="left:8px;top:64.65px;height:29.4px;line-height:31.4px;color:#ededed;">folder_id</div><div class="a df" style="right:8px;top:64.65px;height:29.4px;line-height:31.4px;color:#a6a6a6;">integer</div><div class="a df" style="left:8px;top:94.05px;height:29.4px;line-height:31.4px;color:#ededed;">departement_id</div><div class="a df" style="right:8px;top:94.05px;height:29.4px;line-height:31.4px;color:#a6a6a6;">integer</div></div><div class="a" style="left:2581.8px;top:558.2px;width:176.4px;height:249.05px"><div class="a" style="left:0;top:0;width:176.4px;height:6.2px;background:#eab308;border-radius:5px 5px 0 0"></div><div class="a" style="left:0;top:6.2px;width:176.4px;height:29.05px;background:#1d1d1d"></div><div class="a dh" style="left:10px;top:6.2px;width:156.4px;height:29.05px;line-height:27.55px">accesses</div><div class="a" style="left:0;top:35.25px;width:176.4px;height:213.80px;background:#2e2e2e;border-radius:0 0 7px 7px"></div><div class="a df" style="left:8px;top:35.25px;height:29.4px;line-height:31.4px;color:#ededed;font-weight:bold;">id</div><div class="a df" style="right:8px;top:35.25px;height:29.4px;line-height:31.4px;color:#a6a6a6;font-weight:bold;">int</div><div class="a df" style="left:8px;top:64.65px;height:29.4px;line-height:31.4px;color:#ededed;">status</div><div class="a" style="left:154.4px;top:72.35px;width:14px;height:14px;border-radius:2.5px;background:#b3b3b3;color:#2e2e2e;font-size:11px;line-height:14px;text-align:center">E</div><div class="a df" style="right:26px;top:64.65px;height:29.4px;line-height:31.4px;color:#a6a6a6;">AccessStatus</div><div class="a df" style="left:8px;top:94.05px;height:29.4px;line-height:31.4px;color:#ededed;">space_id</div><div class="a df" style="right:8px;top:94.05px;height:29.4px;line-height:31.4px;color:#a6a6a6;">int</div><div class="a" style="left:0;top:123.45px;width:176.4px;height:29.4px;background:#fdf3ec"></div><div class="a df" style="left:8px;top:123.45px;height:29.4px;line-height:31.4px;color:#e9a70b;">user_id</div><div class="a df" style="right:8px;top:123.45px;height:29.4px;line-height:31.4px;color:#e9a70b;">int</div><div class="a df" style="left:8px;top:152.85px;height:29.4px;line-height:31.4px;color:#ededed;">createdAt</div><div class="a df" style="right:8px;top:152.85px;height:29.4px;line-height:31.4px;color:#a6a6a6;">datetime</div><div class="a df" style="left:8px;top:182.25px;height:29.4px;line-height:31.4px;color:#ededed;">deletedAt</div><div class="a df" style="right:8px;top:182.25px;height:29.4px;line-height:31.4px;color:#a6a6a6;">datetime</div><div class="a df" style="left:8px;top:211.65px;height:29.4px;line-height:31.4px;color:#ededed;">updatedAt</div><div class="a df" style="right:8px;top:211.65px;height:29.4px;line-height:31.4px;color:#a6a6a6;">datetime</div></div><div class="a" style="left:2951.8px;top:606.4px;width:176.4px;height:249.05px"><div class="a" style="left:0;top:0;width:176.4px;height:6.2px;background:#eab308;border-radius:5px 5px 0 0"></div><div class="a" style="left:0;top:6.2px;width:176.4px;height:29.05px;background:#1d1d1d"></div><div class="a dh" style="left:10px;top:6.2px;width:156.4px;height:29.05px;line-height:27.55px">accesses_scopes</div><div class="a" style="left:0;top:35.25px;width:176.4px;height:213.80px;background:#2e2e2e;border-radius:0 0 7px 7px"></div><div class="a df" style="left:8px;top:35.25px;height:29.4px;line-height:31.4px;color:#ededed;font-weight:bold;">id</div><div class="a df" style="right:8px;top:35.25px;height:29.4px;line-height:31.4px;color:#a6a6a6;font-weight:bold;">int</div><div class="a df" style="left:8px;top:64.65px;height:29.4px;line-height:31.4px;color:#ededed;">access_id</div><div class="a df" style="right:8px;top:64.65px;height:29.4px;line-height:31.4px;color:#a6a6a6;">int</div><div class="a df" style="left:8px;top:94.05px;height:29.4px;line-height:31.4px;color:#ededed;">scope_id</div><div class="a df" style="right:8px;top:94.05px;height:29.4px;line-height:31.4px;color:#a6a6a6;">int</div><div class="a df" style="left:8px;top:123.45px;height:29.4px;line-height:31.4px;color:#ededed;">details</div><div class="a df" style="right:8px;top:123.45px;height:29.4px;line-height:31.4px;color:#a6a6a6;">json</div><div class="a df" style="left:8px;top:152.85px;height:29.4px;line-height:31.4px;color:#ededed;">createdAt</div><div class="a df" style="right:8px;top:152.85px;height:29.4px;line-height:31.4px;color:#a6a6a6;">datetime</div><div class="a df" style="left:8px;top:182.25px;height:29.4px;line-height:31.4px;color:#ededed;">deletedAt</div><div class="a df" style="right:8px;top:182.25px;height:29.4px;line-height:31.4px;color:#a6a6a6;">datetime</div><div class="a df" style="left:8px;top:211.65px;height:29.4px;line-height:31.4px;color:#ededed;">updatedAt</div><div class="a df" style="right:8px;top:211.65px;height:29.4px;line-height:31.4px;color:#a6a6a6;">datetime</div></div><div class="a" style="left:1836px;top:1061.6px;width:176.4px;height:337.25px"><div class="a" style="left:0;top:0;width:176.4px;height:6.2px;background:#eab308;border-radius:5px 5px 0 0"></div><div class="a" style="left:0;top:6.2px;width:176.4px;height:29.05px;background:#1d1d1d"></div><div class="a dh" style="left:10px;top:6.2px;width:156.4px;height:29.05px;line-height:27.55px">spaces_addresses</div><div class="a" style="left:0;top:35.25px;width:176.4px;height:302.00px;background:#2e2e2e;border-radius:0 0 7px 7px"></div><div class="a df" style="left:8px;top:35.25px;height:29.4px;line-height:31.4px;color:#ededed;font-weight:bold;">id</div><div class="a df" style="right:8px;top:35.25px;height:29.4px;line-height:31.4px;color:#a6a6a6;font-weight:bold;">int</div><div class="a df" style="left:8px;top:64.65px;height:29.4px;line-height:31.4px;color:#ededed;">name</div><div class="a df" style="right:8px;top:64.65px;height:29.4px;line-height:31.4px;color:#a6a6a6;">varchar</div><div class="a df" style="left:8px;top:94.05px;height:29.4px;line-height:31.4px;color:#ededed;">details</div><div class="a df" style="right:8px;top:94.05px;height:29.4px;line-height:31.4px;color:#a6a6a6;">varchar</div><div class="a df" style="left:8px;top:123.45px;height:29.4px;line-height:31.4px;color:#ededed;">city</div><div class="a df" style="right:8px;top:123.45px;height:29.4px;line-height:31.4px;color:#a6a6a6;">varchar</div><div class="a df" style="left:8px;top:152.85px;height:29.4px;line-height:31.4px;color:#ededed;">postcode</div><div class="a df" style="right:8px;top:152.85px;height:29.4px;line-height:31.4px;color:#a6a6a6;">varchar</div><div class="a df" style="left:8px;top:182.25px;height:29.4px;line-height:31.4px;color:#ededed;">label</div><div class="a" style="left:154.4px;top:189.95px;width:14px;height:14px;border-radius:2.5px;background:#b3b3b3;color:#2e2e2e;font-size:11px;line-height:14px;text-align:center">E</div><div class="a df" style="right:26px;top:182.25px;height:29.4px;line-height:31.4px;color:#a6a6a6;">AddressType</div><div class="a df" style="left:8px;top:211.65px;height:29.4px;line-height:31.4px;color:#ededed;">space_id</div><div class="a df" style="right:8px;top:211.65px;height:29.4px;line-height:31.4px;color:#a6a6a6;">int</div><div class="a df" style="left:8px;top:241.05px;height:29.4px;line-height:31.4px;color:#ededed;">createdAt</div><div class="a df" style="right:8px;top:241.05px;height:29.4px;line-height:31.4px;color:#a6a6a6;">datetime</div><div class="a df" style="left:8px;top:270.45px;height:29.4px;line-height:31.4px;color:#ededed;">deletedAt</div><div class="a df" style="right:8px;top:270.45px;height:29.4px;line-height:31.4px;color:#a6a6a6;">datetime</div><div class="a df" style="left:8px;top:299.85px;height:29.4px;line-height:31.4px;color:#ededed;">updatedAt</div><div class="a df" style="right:8px;top:299.85px;height:29.4px;line-height:31.4px;color:#a6a6a6;">datetime</div></div><div class="a" style="left:2081px;top:1044px;width:176.4px;height:160.85px"><div class="a" style="left:0;top:0;width:176.4px;height:6.2px;background:#0ea5e9;border-radius:5px 5px 0 0"></div><div class="a" style="left:0;top:6.2px;width:176.4px;height:29.05px;background:#1d1d1d"></div><div class="a dh" style="left:10px;top:6.2px;width:156.4px;height:29.05px;line-height:27.55px">medias</div><div class="a" style="left:0;top:35.25px;width:176.4px;height:125.60px;background:#2e2e2e;border-radius:0 0 7px 7px"></div><div class="a df" style="left:8px;top:35.25px;height:29.4px;line-height:31.4px;color:#ededed;font-weight:bold;">id</div><div class="a df" style="right:8px;top:35.25px;height:29.4px;line-height:31.4px;color:#a6a6a6;font-weight:bold;">integer</div><div class="a df" style="left:8px;top:64.65px;height:29.4px;line-height:31.4px;color:#ededed;">name</div><div class="a df" style="right:8px;top:64.65px;height:29.4px;line-height:31.4px;color:#a6a6a6;">text</div><div class="a df" style="left:8px;top:94.05px;height:29.4px;line-height:31.4px;color:#ededed;">folder_id</div><div class="a df" style="right:8px;top:94.05px;height:29.4px;line-height:31.4px;color:#a6a6a6;">integer</div><div class="a df" style="left:8px;top:123.45px;height:29.4px;line-height:31.4px;color:#ededed;">url</div><div class="a df" style="right:8px;top:123.45px;height:29.4px;line-height:31.4px;color:#a6a6a6;">text</div></div><div class="a" style="left:2355.4px;top:1033.5px;width:176.4px;height:160.85px"><div class="a" style="left:0;top:0;width:176.4px;height:6.2px;background:#d946ef;border-radius:5px 5px 0 0"></div><div class="a" style="left:0;top:6.2px;width:176.4px;height:29.05px;background:#1d1d1d"></div><div class="a dh" style="left:10px;top:6.2px;width:156.4px;height:29.05px;line-height:27.55px">folders</div><div class="a" style="left:0;top:35.25px;width:176.4px;height:125.60px;background:#2e2e2e;border-radius:0 0 7px 7px"></div><div class="a df" style="left:8px;top:35.25px;height:29.4px;line-height:31.4px;color:#ededed;font-weight:bold;">id</div><div class="a df" style="right:8px;top:35.25px;height:29.4px;line-height:31.4px;color:#a6a6a6;font-weight:bold;">int</div><div class="a df" style="left:8px;top:64.65px;height:29.4px;line-height:31.4px;color:#ededed;">name</div><div class="a df" style="right:8px;top:64.65px;height:29.4px;line-height:31.4px;color:#a6a6a6;">varchar</div><div class="a df" style="left:8px;top:94.05px;height:29.4px;line-height:31.4px;color:#ededed;">is_default</div><div class="a df" style="right:8px;top:94.05px;height:29.4px;line-height:31.4px;color:#a6a6a6;">boolean</div><div class="a df" style="left:8px;top:123.45px;height:29.4px;line-height:31.4px;color:#ededed;">space_id</div><div class="a df" style="right:8px;top:123.45px;height:29.4px;line-height:31.4px;color:#a6a6a6;">integer</div></div><div class="a" style="left:3071px;top:1183px;width:176.4px;height:249.05px"><div class="a" style="left:0;top:0;width:176.4px;height:6.2px;background:#f05a3a;border-radius:5px 5px 0 0"></div><div class="a" style="left:0;top:6.2px;width:176.4px;height:29.05px;background:#1d1d1d"></div><div class="a dh" style="left:10px;top:6.2px;width:156.4px;height:29.05px;line-height:27.55px">scopes</div><div class="a" style="left:0;top:35.25px;width:176.4px;height:213.80px;background:#2e2e2e;border-radius:0 0 7px 7px"></div><div class="a df" style="left:8px;top:35.25px;height:29.4px;line-height:31.4px;color:#ededed;font-weight:bold;">id</div><div class="a df" style="right:8px;top:35.25px;height:29.4px;line-height:31.4px;color:#a6a6a6;font-weight:bold;">int</div><div class="a df" style="left:8px;top:64.65px;height:29.4px;line-height:31.4px;color:#ededed;">object</div><div class="a df" style="right:8px;top:64.65px;height:29.4px;line-height:31.4px;color:#a6a6a6;">varchar</div><div class="a df" style="left:8px;top:94.05px;height:29.4px;line-height:31.4px;color:#ededed;">object_id</div><div class="a df" style="right:8px;top:94.05px;height:29.4px;line-height:31.4px;color:#a6a6a6;">int</div><div class="a df" style="left:8px;top:123.45px;height:29.4px;line-height:31.4px;color:#ededed;">label</div><div class="a" style="left:154.4px;top:131.15px;width:14px;height:14px;border-radius:2.5px;background:#b3b3b3;color:#2e2e2e;font-size:11px;line-height:14px;text-align:center">E</div><div class="a df" style="right:26px;top:123.45px;height:29.4px;line-height:31.4px;color:#a6a6a6;">Permission</div><div class="a df" style="left:8px;top:152.85px;height:29.4px;line-height:31.4px;color:#ededed;">createdAt</div><div class="a df" style="right:8px;top:152.85px;height:29.4px;line-height:31.4px;color:#a6a6a6;">datetime</div><div class="a df" style="left:8px;top:182.25px;height:29.4px;line-height:31.4px;color:#ededed;">deletedAt</div><div class="a df" style="right:8px;top:182.25px;height:29.4px;line-height:31.4px;color:#a6a6a6;">datetime</div><div class="a df" style="left:8px;top:211.65px;height:29.4px;line-height:31.4px;color:#ededed;">updatedAt</div><div class="a df" style="right:8px;top:211.65px;height:29.4px;line-height:31.4px;color:#a6a6a6;">datetime</div></div><div class="a" style="left:2630.5px;top:1326.1px;width:176.4px;height:307.85px"><div class="a" style="left:0;top:0;width:176.4px;height:6.2px;background:#84cc16;border-radius:5px 5px 0 0"></div><div class="a" style="left:0;top:6.2px;width:176.4px;height:29.05px;background:#1d1d1d"></div><div class="a dh" style="left:10px;top:6.2px;width:156.4px;height:29.05px;line-height:27.55px">spaces</div><div class="a" style="left:0;top:35.25px;width:176.4px;height:272.60px;background:#2e2e2e;border-radius:0 0 7px 7px"></div><div class="a df" style="left:8px;top:35.25px;height:29.4px;line-height:31.4px;color:#ededed;font-weight:bold;">id</div><div class="a df" style="right:8px;top:35.25px;height:29.4px;line-height:31.4px;color:#a6a6a6;font-weight:bold;">integer</div><div class="a df" style="left:8px;top:64.65px;height:29.4px;line-height:31.4px;color:#ededed;">name</div><div class="a df" style="right:8px;top:64.65px;height:29.4px;line-height:31.4px;color:#a6a6a6;">varchar</div><div class="a df" style="left:8px;top:94.05px;height:29.4px;line-height:31.4px;color:#ededed;">company</div><div class="a df" style="right:8px;top:94.05px;height:29.4px;line-height:31.4px;color:#a6a6a6;">varchar</div><div class="a df" style="left:8px;top:123.45px;height:29.4px;line-height:31.4px;color:#ededed;">siret</div><div class="a df" style="right:8px;top:123.45px;height:29.4px;line-height:31.4px;color:#a6a6a6;">varchar</div><div class="a df" style="left:8px;top:152.85px;height:29.4px;line-height:31.4px;color:#ededed;">logoPath</div><div class="a df" style="right:8px;top:152.85px;height:29.4px;line-height:31.4px;color:#a6a6a6;">varchar</div><div class="a df" style="left:8px;top:182.25px;height:29.4px;line-height:31.4px;color:#ededed;">onboardingComplete</div><div class="a df" style="right:8px;top:182.25px;height:29.4px;line-height:31.4px;color:#a6a6a6;">boolean</div><div class="a df" style="left:8px;top:211.65px;height:29.4px;line-height:31.4px;color:#ededed;">createdAt</div><div class="a df" style="right:8px;top:211.65px;height:29.4px;line-height:31.4px;color:#a6a6a6;">datetime</div><div class="a df" style="left:8px;top:241.05px;height:29.4px;line-height:31.4px;color:#ededed;">deletedAt</div><div class="a df" style="right:8px;top:241.05px;height:29.4px;line-height:31.4px;color:#a6a6a6;">datetime</div><div class="a df" style="left:8px;top:270.45px;height:29.4px;line-height:31.4px;color:#ededed;">updatedAt</div><div class="a df" style="right:8px;top:270.45px;height:29.4px;line-height:31.4px;color:#a6a6a6;">datetime</div></div><div class="a" style="left:1780.1px;top:1598.8px;width:176.4px;height:160.85px"><div class="a" style="left:0;top:0;width:176.4px;height:6.2px;background:#f05a40;border-radius:5px 5px 0 0"></div><div class="a" style="left:0;top:6.2px;width:176.4px;height:29.05px;background:#1d1d1d"></div><div class="a dh" style="left:10px;top:6.2px;width:156.4px;height:29.05px;line-height:27.55px">spaces_configurations</div><div class="a" style="left:0;top:35.25px;width:176.4px;height:125.60px;background:#2e2e2e;border-radius:0 0 7px 7px"></div><div class="a df" style="left:8px;top:35.25px;height:29.4px;line-height:31.4px;color:#ededed;">id</div><div class="a df" style="right:8px;top:35.25px;height:29.4px;line-height:31.4px;color:#a6a6a6;">int</div><div class="a df" style="left:8px;top:64.65px;height:29.4px;line-height:31.4px;color:#ededed;">value</div><div class="a df" style="right:8px;top:64.65px;height:29.4px;line-height:31.4px;color:#a6a6a6;">json</div><div class="a" style="left:0;top:94.05px;width:176.4px;height:29.4px;background:#fdf3ec"></div><div class="a df" style="left:8px;top:94.05px;height:29.4px;line-height:31.4px;color:#e5533d;">space_id</div><div class="a df" style="right:8px;top:94.05px;height:29.4px;line-height:31.4px;color:#e5533d;">int</div><div class="a df" style="left:8px;top:123.45px;height:29.4px;line-height:31.4px;color:#ededed;">configuration_id</div><div class="a df" style="right:8px;top:123.45px;height:29.4px;line-height:31.4px;color:#a6a6a6;">int</div></div><div class="a" style="left:3044.5px;top:1690.7px;width:176.4px;height:396.05px"><div class="a" style="left:0;top:0;width:176.4px;height:6.2px;background:#925cf5;border-radius:5px 5px 0 0"></div><div class="a" style="left:0;top:6.2px;width:176.4px;height:29.05px;background:#1d1d1d"></div><div class="a dh" style="left:10px;top:6.2px;width:156.4px;height:29.05px;line-height:27.55px">users</div><div class="a" style="left:0;top:35.25px;width:176.4px;height:360.80px;background:#2e2e2e;border-radius:0 0 7px 7px"></div><div class="a" style="left:0;top:35.25px;width:176.4px;height:29.4px;background:#f1f0fd"></div><div class="a df" style="left:8px;top:35.25px;height:29.4px;line-height:31.4px;color:#8b5cf6;font-weight:bold;">id</div><div class="a df" style="right:8px;top:35.25px;height:29.4px;line-height:31.4px;color:#8b5cf6;font-weight:bold;">integer</div><div class="a df" style="left:8px;top:64.65px;height:29.4px;line-height:31.4px;color:#ededed;">firstName</div><div class="a df" style="right:8px;top:64.65px;height:29.4px;line-height:31.4px;color:#a6a6a6;">varchar</div><div class="a df" style="left:8px;top:94.05px;height:29.4px;line-height:31.4px;color:#ededed;">lastName</div><div class="a df" style="right:8px;top:94.05px;height:29.4px;line-height:31.4px;color:#a6a6a6;">varchar</div><div class="a df" style="left:8px;top:123.45px;height:29.4px;line-height:31.4px;color:#ededed;">gender</div><div class="a df" style="right:8px;top:123.45px;height:29.4px;line-height:31.4px;color:#a6a6a6;">varchar</div><div class="a" style="left:0;top:152.85px;width:176.4px;height:29.4px;background:#f1f0fd"></div><div class="a df" style="left:8px;top:152.85px;height:29.4px;line-height:31.4px;color:#8b5cf6;">email</div><div class="a df" style="right:8px;top:152.85px;height:29.4px;line-height:31.4px;color:#8b5cf6;">varchar</div><div class="a df" style="left:8px;top:182.25px;height:29.4px;line-height:31.4px;color:#ededed;">emailemailemailemail…</div><div class="a df" style="right:8px;top:182.25px;height:29.4px;line-height:31.4px;color:#a6a6a6;">varchar</div><div class="a df" style="left:8px;top:211.65px;height:29.4px;line-height:31.4px;color:#ededed;">phoneNumber</div><div class="a df" style="right:8px;top:211.65px;height:29.4px;line-height:31.4px;color:#a6a6a6;">varchar</div><div class="a df" style="left:8px;top:241.05px;height:29.4px;line-height:31.4px;color:#ededed;">password</div><div class="a df" style="right:8px;top:241.05px;height:29.4px;line-height:31.4px;color:#a6a6a6;">varchar</div><div class="a df" style="left:8px;top:270.45px;height:29.4px;line-height:31.4px;color:#ededed;">verified</div><div class="a df" style="right:8px;top:270.45px;height:29.4px;line-height:31.4px;color:#a6a6a6;">boolean</div><div class="a df" style="left:8px;top:299.85px;height:29.4px;line-height:31.4px;color:#ededed;">createdAt</div><div class="a df" style="right:8px;top:299.85px;height:29.4px;line-height:31.4px;color:#a6a6a6;">datetime</div><div class="a df" style="left:8px;top:329.25px;height:29.4px;line-height:31.4px;color:#ededed;">deletedAt</div><div class="a df" style="right:8px;top:329.25px;height:29.4px;line-height:31.4px;color:#a6a6a6;">datetime</div><div class="a df" style="left:8px;top:358.65px;height:29.4px;line-height:31.4px;color:#ededed;">updatedAt</div><div class="a df" style="right:8px;top:358.65px;height:29.4px;line-height:31.4px;color:#a6a6a6;">datetime</div></div><div class="a" style="left:3276px;top:254px;width:80px;height:84px;border:2px solid #e2e1e6;border-radius:13px;background:#000;box-shadow:0 4px 10px rgba(0,0,0,0.35)"></div><svg class="a" style="left:3290px;top:270px" width="52" height="52" fill="none"><path d="M25.5 7.5 A 19 19 0 1 0 44 29 A 13 13 0 0 1 25.5 7.5 Z" stroke="#e2e1e6" stroke-width="3.8" stroke-linejoin="round" transform="translate(3,0)"/></svg><div class="a" style="left:3436.0px;top:214.0px;width:20.0px;height:1935.0px;background:#424242;"></div><div class="a" style="left:1456.0px;top:2170.0px;width:1922.0px;height:20.0px;background:#424242;"></div><div class="a" style="left:0.0px;top:2190.0px;width:3456.0px;height:2.0px;background:#2b2b2b;"></div><div class="a" style="left:0.0px;top:2192.0px;width:3456.0px;height:42.0px;background:#181818;"></div><div class="a" style="left:0.0px;top:2192.0px;width:68.0px;height:42.0px;background:#0078d4;"></div><svg class="a" style="left:20px;top:2198px" width="30" height="30" fill="none"><path d="M7 6 L17 16 L7 26 M24 2 L16 10 L24 18" stroke="#ffffff" stroke-width="2.2" transform="translate(0,0)"/></svg><svg class="a" style="left:80px;top:2196px" width="500" height="38" fill="none" stroke="#cccccc" stroke-width="2.2"><circle cx="8" cy="6" r="3.8"/><circle cx="8" cy="30" r="3.8"/><circle cx="22" cy="13" r="3.8"/><path d="M8 10 V26 M22 17 C22 22 10 20 8 26"/><path d="M116 12 A10 10 0 0 1 134 13 M134 13 L136 7 M134 13 L128 12 M136 22 A10 10 0 0 1 118 21 M118 21 L116 27 M118 21 L124 22"/><circle cx="173" cy="8" r="3.5"/><circle cx="173" cy="27" r="3.5"/><path d="M173 11.5 V23.5 M180 2 V37"/><circle cx="188" cy="15" r="3.5"/><path d="M188 18.5 C188 25 182 25 180 27"/><circle cx="242" cy="17" r="11"/><path d="M237 12 L247 22 M247 12 L237 22"/><path d="M298 6 L310 28 H286 Z M298 13 V21 M298 24 V25.5"/><circle cx="355" cy="17" r="11"/><path d="M355 15 V24 M355 10.5 V11.5"/><path d="M438 17 L433 33 M438 17 L443 33 M434 28 H442 M432 9 A8 8 0 0 0 432 23 M444 9 A8 8 0 0 1 444 23 M429 5 A13 13 0 0 0 429 27 M447 5 A13 13 0 0 1 447 27"/><circle cx="438" cy="15" r="2"/></svg><div class="t" style="left:115.5px;top:2200.0px;font-size:24.76px;color:#cccccc;">main*</div><div class="t" style="left:343.0px;top:2199.9px;font-size:24.8px;color:#cccccc;">0</div><div class="t" style="left:400.0px;top:2199.9px;font-size:24.8px;color:#cccccc;">1</div><div class="t" style="left:456.0px;top:2199.9px;font-size:24.8px;color:#cccccc;">8</div><div class="t" style="left:538.0px;top:2199.9px;font-size:24.8px;color:#cccccc;">0</div><svg class="a" style="left:585px;top:2199px" width="30" height="30" fill="none" stroke="#cccccc" stroke-width="2.2"><ellipse cx="14" cy="5" rx="9" ry="3.5"/><path d="M5 5 V24 a9 3.5 0 0 0 18 0 V5"/></svg><div class="t" style="left:620.0px;top:2199.3px;font-size:25.51px;color:#cccccc;">Connect</div><div class="t" style="left:748.0px;top:2200.0px;font-size:24.68px;color:#cccccc;">Git Graph</div><svg class="a" style="left:887px;top:2200px" width="30" height="26" fill="none" stroke="#cccccc" stroke-width="2.2"><path d="M8 20 H22 a5.5 5.5 0 0 0 0.5 -11 a8 8 0 0 0 -15 1.5 a5 5 0 0 0 0.5 9.5 Z"/></svg><div class="t" style="left:923.0px;top:2199.6px;font-size:25.21px;color:#cccccc;">Cloud Code - Sign in</div><div class="t" style="left:2381.5px;top:2199.8px;font-size:25px;color:#cccccc;">Codeium: {...}</div><svg class="a" style="left:2564px;top:2199px" width="30" height="30" fill="none" stroke="#cccccc" stroke-width="2.2"><path d="M12 2 H16 L17 6 L21 4 L24 7 L22 11 L26 12 V16"/><path d="M16 26 H12 L11 22 L7 24 L4 21 L6 17 L2 16 V12 L6 11 L4 7 L7 4 L11 6 Z"/><circle cx="14" cy="14" r="4"/></svg><div class="a" style="left:2580px;top:2215px;width:14px;height:14px;border-radius:7px;background:#cccccc"></div><div class="a" style="left:2583px;top:2221px;width:8px;height:2px;background:#181818"></div><div class="t" style="left:2600.0px;top:2199.8px;font-size:25px;color:#cccccc;">Spell</div><div class="a" style="left:2671.0px;top:2192.0px;width:68.0px;height:42.0px;background:#7c6a0c;"></div><svg class="a" style="left:2690px;top:2199px" width="32" height="30" fill="none" stroke="#ffffff" stroke-width="2.2"><path d="M4 3 L28 27 M10 15 L15 3 L17 13 L27 11 L15 16 M6 20 L14 18 M17 21 L16 28"/></svg><div class="t" style="left:2756.0px;top:2199.4px;font-size:25.4px;color:#cccccc;">Colorize: 0 variables</div><svg class="a" style="left:3016px;top:2199px" width="30" height="30" fill="none" stroke="#f0624d" stroke-width="2.4"><circle cx="14" cy="14" r="11"/><path d="M6.5 21.5 L21.5 6.5"/></svg><div class="t" style="left:3052.0px;top:2199.4px;font-size:25.4px;color:#f0624d;">Colorize</div><svg class="a" style="left:3176px;top:2205px" width="18" height="20" fill="none"><path d="M8 2 L15 6 V14 L8 18 L1 14 V6 Z" fill="#cccccc"/><path d="M6 7 L11 10 L6 13 Z" fill="#181818"/></svg><div class="t" style="left:3200.0px;top:2199.4px;font-size:25.4px;color:#cccccc;">tabnine starter</div><svg class="a" style="left:3396px;top:2198px" width="28" height="32" fill="none" stroke="#cccccc" stroke-width="2.2"><path d="M4 22 V14 a10 10 0 0 1 20 0 V22 L26 25 H2 Z M10 28 a4 4 0 0 0 8 0"/></svg></body></html>
